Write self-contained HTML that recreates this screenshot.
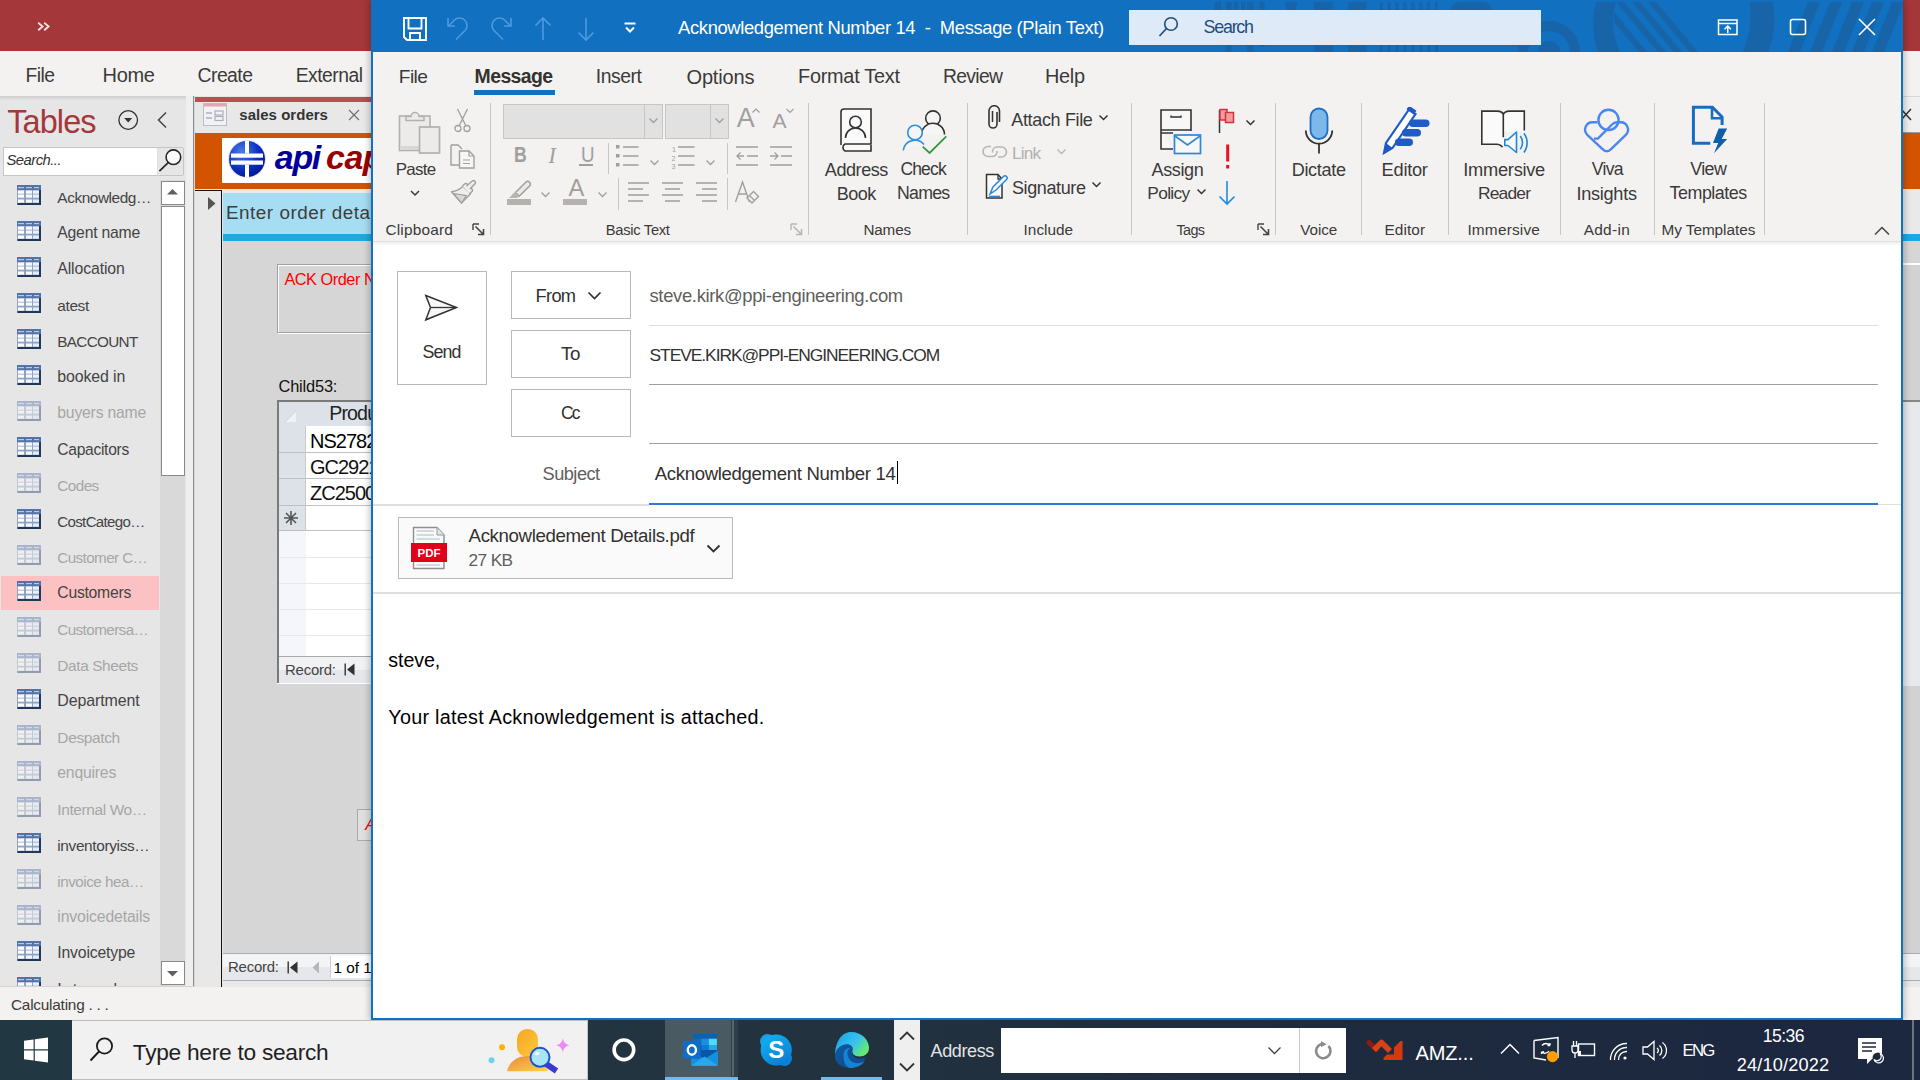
<!DOCTYPE html><html><head><meta charset="utf-8"><style>
html,body{margin:0;padding:0;width:1920px;height:1080px;overflow:hidden;background:#D6D6D6;}
body{position:relative;font-family:"Liberation Sans",sans-serif;}
.r{position:absolute;display:block;}
.t{position:absolute;white-space:pre;line-height:1;}
</style></head><body><div class="r" style="left:0px;top:0px;width:1920px;height:51px;background:#A4373A;"></div><svg class="r" style="left:36px;top:21px;" width="15" height="11" viewBox="0 0 15 11"><path d="M2.2 1.8 L6.6 5.5 L2.2 9.2 M8.2 1.8 L12.6 5.5 L8.2 9.2" stroke="#FADDE0" stroke-width="1.9" fill="none"/></svg><div class="r" style="left:0px;top:51px;width:1920px;height:45px;background:#F3F2F1;"></div><div class="t" style="left:25.50px;top:65.65px;font-size:19.31px;color:#3B3A39;letter-spacing:-0.529px;">File</div><div class="t" style="left:102.50px;top:65.06px;font-size:20.00px;color:#3B3A39;letter-spacing:-0.303px;">Home</div><div class="t" style="left:197.50px;top:65.57px;font-size:19.40px;color:#3B3A39;letter-spacing:-0.542px;">Create</div><div class="t" style="left:295.75px;top:65.65px;font-size:19.31px;color:#3B3A39;letter-spacing:-0.517px;">External</div><div class="r" style="left:0px;top:96px;width:1920px;height:5px;background:linear-gradient(#CFCFCF,#E6E6E6);"></div><div class="r" style="left:0px;top:100px;width:186px;height:887px;background:#E6E6E6;"></div><div class="r" style="left:186px;top:96px;width:7px;height:891px;background:#EEEFF0;"></div><div class="r" style="left:193px;top:96px;width:1px;height:891px;background:#8A8E93;"></div><div class="t" style="left:7.20px;top:106.34px;font-size:32.44px;color:#A4373A;letter-spacing:-0.868px;">Tables</div><svg class="r" style="left:117px;top:109px;" width="23" height="23" viewBox="0 0 23 23"><circle cx="11.2" cy="11" r="9.3" stroke="#333" stroke-width="1.3" fill="none"/><path d="M7.2 9 L15.2 9 L11.2 13.6 Z" fill="#333"/></svg><svg class="r" style="left:156px;top:111px;" width="13" height="19" viewBox="0 0 13 19"><path d="M10 1.5 L2.5 9 L10 16.5" stroke="#444" stroke-width="1.5" fill="none"/></svg><div class="r" style="left:3px;top:147px;width:180px;height:29px;background:#FFF;border:1px solid #C6C6C6;box-sizing:border-box;"></div><div class="r" style="left:157px;top:148px;width:25px;height:27px;background:#E6E6E6;border-left:1px solid #E0E0E0;border-right:1px solid #C6C6C6;"></div><svg class="r" style="left:157px;top:148px;" width="26" height="27" viewBox="0 0 26 27"><circle cx="16.4" cy="9.2" r="7.3" stroke="#262626" stroke-width="1.6" fill="#FAFAFA"/><path d="M11.2 14.6 L2.4 23.2" stroke="#262626" stroke-width="1.7"/></svg><div class="t" style="left:6.50px;top:153.45px;font-size:14.83px;color:#333;font-style:italic;letter-spacing:-0.539px;">Search...</div><div class="r" style="left:160px;top:180px;width:25px;height:807px;background:#D9D9D9;"></div><div class="r" style="left:160.5px;top:180.5px;width:24px;height:24px;background:#FFF;border:1px solid #8A8A8A;box-sizing:border-box;"></div><svg class="r" style="left:160px;top:180px;" width="25" height="25" viewBox="0 0 25 25"><path d="M7 14.5 L12.5 9 L18 14.5 Z" fill="#606060"/></svg><div class="r" style="left:160.5px;top:205.5px;width:24px;height:270px;background:#FFF;border:1px solid #8A8A8A;box-sizing:border-box;"></div><div class="r" style="left:160.5px;top:961px;width:24px;height:24px;background:#FFF;border:1px solid #8A8A8A;box-sizing:border-box;"></div><svg class="r" style="left:160px;top:961px;" width="25" height="25" viewBox="0 0 25 25"><path d="M7 10 L12.5 15.5 L18 10 Z" fill="#606060"/></svg><div class="r" style="left:1px;top:576px;width:158px;height:34px;background:#FCC2C3;"></div><div class="r" style="left:0;top:180px;width:160px;height:806px;overflow:hidden;"><div class="r" style="left:0;top:-180px;width:160px;height:1080px;"><svg class="r" style="left:17px;top:185px;" width="24" height="20" viewBox="0 0 24 20"><rect x="0" y="0" width="24" height="20" fill="#8FA2C0"/><rect x="0" y="0" width="24" height="5" fill="#5472A8"/><rect x="1" y="2" width="6" height="1.2" fill="#B9C7E0"/><rect x="9" y="2" width="6" height="1.2" fill="#B9C7E0"/><rect x="17" y="2" width="5" height="1.2" fill="#B9C7E0"/><rect x="1" y="5.5" width="6" height="3.2" fill="#FFF"/><rect x="9" y="5.5" width="6" height="3.2" fill="#F4F8FF"/><rect x="16" y="5.5" width="6" height="3.2" fill="#E8F0FF"/><rect x="1" y="9.5" width="6" height="3.2" fill="#FFF"/><rect x="9" y="9.5" width="6" height="3.2" fill="#F4F8FF"/><rect x="16" y="9.5" width="6" height="3.2" fill="#E8F0FF"/><rect x="1" y="14.5" width="6" height="3.2" fill="#FFF"/><rect x="9" y="14.5" width="6" height="3.2" fill="#F4F8FF"/><rect x="16" y="14.5" width="6" height="3.2" fill="#E2ECFF"/><rect x="22" y="5" width="2" height="15" fill="#22385A"/><rect x="0.5" y="18" width="23.5" height="2" fill="#22385A"/></svg><div class="t" style="left:57.30px;top:189.66px;font-size:15.41px;color:#444444;letter-spacing:-0.444px;">Acknowledg…</div><svg class="r" style="left:17px;top:221px;" width="24" height="20" viewBox="0 0 24 20"><rect x="0" y="0" width="24" height="20" fill="#8FA2C0"/><rect x="0" y="0" width="24" height="5" fill="#5472A8"/><rect x="1" y="2" width="6" height="1.2" fill="#B9C7E0"/><rect x="9" y="2" width="6" height="1.2" fill="#B9C7E0"/><rect x="17" y="2" width="5" height="1.2" fill="#B9C7E0"/><rect x="1" y="5.5" width="6" height="3.2" fill="#FFF"/><rect x="9" y="5.5" width="6" height="3.2" fill="#F4F8FF"/><rect x="16" y="5.5" width="6" height="3.2" fill="#E8F0FF"/><rect x="1" y="9.5" width="6" height="3.2" fill="#FFF"/><rect x="9" y="9.5" width="6" height="3.2" fill="#F4F8FF"/><rect x="16" y="9.5" width="6" height="3.2" fill="#E8F0FF"/><rect x="1" y="14.5" width="6" height="3.2" fill="#FFF"/><rect x="9" y="14.5" width="6" height="3.2" fill="#F4F8FF"/><rect x="16" y="14.5" width="6" height="3.2" fill="#E2ECFF"/><rect x="22" y="5" width="2" height="15" fill="#22385A"/><rect x="0.5" y="18" width="23.5" height="2" fill="#22385A"/></svg><div class="t" style="left:57.30px;top:225.36px;font-size:15.75px;color:#444444;letter-spacing:-0.222px;">Agent name</div><svg class="r" style="left:17px;top:257px;" width="24" height="20" viewBox="0 0 24 20"><rect x="0" y="0" width="24" height="20" fill="#8FA2C0"/><rect x="0" y="0" width="24" height="5" fill="#5472A8"/><rect x="1" y="2" width="6" height="1.2" fill="#B9C7E0"/><rect x="9" y="2" width="6" height="1.2" fill="#B9C7E0"/><rect x="17" y="2" width="5" height="1.2" fill="#B9C7E0"/><rect x="1" y="5.5" width="6" height="3.2" fill="#FFF"/><rect x="9" y="5.5" width="6" height="3.2" fill="#F4F8FF"/><rect x="16" y="5.5" width="6" height="3.2" fill="#E8F0FF"/><rect x="1" y="9.5" width="6" height="3.2" fill="#FFF"/><rect x="9" y="9.5" width="6" height="3.2" fill="#F4F8FF"/><rect x="16" y="9.5" width="6" height="3.2" fill="#E8F0FF"/><rect x="1" y="14.5" width="6" height="3.2" fill="#FFF"/><rect x="9" y="14.5" width="6" height="3.2" fill="#F4F8FF"/><rect x="16" y="14.5" width="6" height="3.2" fill="#E2ECFF"/><rect x="22" y="5" width="2" height="15" fill="#22385A"/><rect x="0.5" y="18" width="23.5" height="2" fill="#22385A"/></svg><div class="t" style="left:57.30px;top:261.28px;font-size:15.85px;color:#444444;letter-spacing:-0.134px;">Allocation</div><svg class="r" style="left:17px;top:293px;" width="24" height="20" viewBox="0 0 24 20"><rect x="0" y="0" width="24" height="20" fill="#8FA2C0"/><rect x="0" y="0" width="24" height="5" fill="#5472A8"/><rect x="1" y="2" width="6" height="1.2" fill="#B9C7E0"/><rect x="9" y="2" width="6" height="1.2" fill="#B9C7E0"/><rect x="17" y="2" width="5" height="1.2" fill="#B9C7E0"/><rect x="1" y="5.5" width="6" height="3.2" fill="#FFF"/><rect x="9" y="5.5" width="6" height="3.2" fill="#F4F8FF"/><rect x="16" y="5.5" width="6" height="3.2" fill="#E8F0FF"/><rect x="1" y="9.5" width="6" height="3.2" fill="#FFF"/><rect x="9" y="9.5" width="6" height="3.2" fill="#F4F8FF"/><rect x="16" y="9.5" width="6" height="3.2" fill="#E8F0FF"/><rect x="1" y="14.5" width="6" height="3.2" fill="#FFF"/><rect x="9" y="14.5" width="6" height="3.2" fill="#F4F8FF"/><rect x="16" y="14.5" width="6" height="3.2" fill="#E2ECFF"/><rect x="22" y="5" width="2" height="15" fill="#22385A"/><rect x="0.5" y="18" width="23.5" height="2" fill="#22385A"/></svg><div class="t" style="left:57.30px;top:297.64px;font-size:15.42px;color:#444444;letter-spacing:-0.368px;">atest</div><svg class="r" style="left:17px;top:329px;" width="24" height="20" viewBox="0 0 24 20"><rect x="0" y="0" width="24" height="20" fill="#8FA2C0"/><rect x="0" y="0" width="24" height="5" fill="#5472A8"/><rect x="1" y="2" width="6" height="1.2" fill="#B9C7E0"/><rect x="9" y="2" width="6" height="1.2" fill="#B9C7E0"/><rect x="17" y="2" width="5" height="1.2" fill="#B9C7E0"/><rect x="1" y="5.5" width="6" height="3.2" fill="#FFF"/><rect x="9" y="5.5" width="6" height="3.2" fill="#F4F8FF"/><rect x="16" y="5.5" width="6" height="3.2" fill="#E8F0FF"/><rect x="1" y="9.5" width="6" height="3.2" fill="#FFF"/><rect x="9" y="9.5" width="6" height="3.2" fill="#F4F8FF"/><rect x="16" y="9.5" width="6" height="3.2" fill="#E8F0FF"/><rect x="1" y="14.5" width="6" height="3.2" fill="#FFF"/><rect x="9" y="14.5" width="6" height="3.2" fill="#F4F8FF"/><rect x="16" y="14.5" width="6" height="3.2" fill="#E2ECFF"/><rect x="22" y="5" width="2" height="15" fill="#22385A"/><rect x="0.5" y="18" width="23.5" height="2" fill="#22385A"/></svg><div class="t" style="left:57.30px;top:333.78px;font-size:15.26px;color:#444444;letter-spacing:-0.661px;">BACCOUNT</div><svg class="r" style="left:17px;top:365px;" width="24" height="20" viewBox="0 0 24 20"><rect x="0" y="0" width="24" height="20" fill="#8FA2C0"/><rect x="0" y="0" width="24" height="5" fill="#5472A8"/><rect x="1" y="2" width="6" height="1.2" fill="#B9C7E0"/><rect x="9" y="2" width="6" height="1.2" fill="#B9C7E0"/><rect x="17" y="2" width="5" height="1.2" fill="#B9C7E0"/><rect x="1" y="5.5" width="6" height="3.2" fill="#FFF"/><rect x="9" y="5.5" width="6" height="3.2" fill="#F4F8FF"/><rect x="16" y="5.5" width="6" height="3.2" fill="#E8F0FF"/><rect x="1" y="9.5" width="6" height="3.2" fill="#FFF"/><rect x="9" y="9.5" width="6" height="3.2" fill="#F4F8FF"/><rect x="16" y="9.5" width="6" height="3.2" fill="#E8F0FF"/><rect x="1" y="14.5" width="6" height="3.2" fill="#FFF"/><rect x="9" y="14.5" width="6" height="3.2" fill="#F4F8FF"/><rect x="16" y="14.5" width="6" height="3.2" fill="#E2ECFF"/><rect x="22" y="5" width="2" height="15" fill="#22385A"/><rect x="0.5" y="18" width="23.5" height="2" fill="#22385A"/></svg><div class="t" style="left:57.30px;top:369.23px;font-size:15.91px;color:#444444;letter-spacing:-0.120px;">booked in</div><svg class="r" style="left:17px;top:401px;opacity:0.42;" width="24" height="20" viewBox="0 0 24 20"><rect x="0" y="0" width="24" height="20" fill="#8FA2C0"/><rect x="0" y="0" width="24" height="5" fill="#5472A8"/><rect x="1" y="2" width="6" height="1.2" fill="#B9C7E0"/><rect x="9" y="2" width="6" height="1.2" fill="#B9C7E0"/><rect x="17" y="2" width="5" height="1.2" fill="#B9C7E0"/><rect x="1" y="5.5" width="6" height="3.2" fill="#FFF"/><rect x="9" y="5.5" width="6" height="3.2" fill="#F4F8FF"/><rect x="16" y="5.5" width="6" height="3.2" fill="#E8F0FF"/><rect x="1" y="9.5" width="6" height="3.2" fill="#FFF"/><rect x="9" y="9.5" width="6" height="3.2" fill="#F4F8FF"/><rect x="16" y="9.5" width="6" height="3.2" fill="#E8F0FF"/><rect x="1" y="14.5" width="6" height="3.2" fill="#FFF"/><rect x="9" y="14.5" width="6" height="3.2" fill="#F4F8FF"/><rect x="16" y="14.5" width="6" height="3.2" fill="#E2ECFF"/><rect x="22" y="5" width="2" height="15" fill="#22385A"/><rect x="0.5" y="18" width="23.5" height="2" fill="#22385A"/></svg><div class="t" style="left:57.30px;top:405.35px;font-size:15.76px;color:#A6A6A6;letter-spacing:-0.210px;">buyers name</div><svg class="r" style="left:17px;top:437px;" width="24" height="20" viewBox="0 0 24 20"><rect x="0" y="0" width="24" height="20" fill="#8FA2C0"/><rect x="0" y="0" width="24" height="5" fill="#5472A8"/><rect x="1" y="2" width="6" height="1.2" fill="#B9C7E0"/><rect x="9" y="2" width="6" height="1.2" fill="#B9C7E0"/><rect x="17" y="2" width="5" height="1.2" fill="#B9C7E0"/><rect x="1" y="5.5" width="6" height="3.2" fill="#FFF"/><rect x="9" y="5.5" width="6" height="3.2" fill="#F4F8FF"/><rect x="16" y="5.5" width="6" height="3.2" fill="#E8F0FF"/><rect x="1" y="9.5" width="6" height="3.2" fill="#FFF"/><rect x="9" y="9.5" width="6" height="3.2" fill="#F4F8FF"/><rect x="16" y="9.5" width="6" height="3.2" fill="#E8F0FF"/><rect x="1" y="14.5" width="6" height="3.2" fill="#FFF"/><rect x="9" y="14.5" width="6" height="3.2" fill="#F4F8FF"/><rect x="16" y="14.5" width="6" height="3.2" fill="#E2ECFF"/><rect x="22" y="5" width="2" height="15" fill="#22385A"/><rect x="0.5" y="18" width="23.5" height="2" fill="#22385A"/></svg><div class="t" style="left:57.30px;top:441.50px;font-size:15.59px;color:#444444;letter-spacing:-0.280px;">Capacitors</div><svg class="r" style="left:17px;top:473px;opacity:0.42;" width="24" height="20" viewBox="0 0 24 20"><rect x="0" y="0" width="24" height="20" fill="#8FA2C0"/><rect x="0" y="0" width="24" height="5" fill="#5472A8"/><rect x="1" y="2" width="6" height="1.2" fill="#B9C7E0"/><rect x="9" y="2" width="6" height="1.2" fill="#B9C7E0"/><rect x="17" y="2" width="5" height="1.2" fill="#B9C7E0"/><rect x="1" y="5.5" width="6" height="3.2" fill="#FFF"/><rect x="9" y="5.5" width="6" height="3.2" fill="#F4F8FF"/><rect x="16" y="5.5" width="6" height="3.2" fill="#E8F0FF"/><rect x="1" y="9.5" width="6" height="3.2" fill="#FFF"/><rect x="9" y="9.5" width="6" height="3.2" fill="#F4F8FF"/><rect x="16" y="9.5" width="6" height="3.2" fill="#E8F0FF"/><rect x="1" y="14.5" width="6" height="3.2" fill="#FFF"/><rect x="9" y="14.5" width="6" height="3.2" fill="#F4F8FF"/><rect x="16" y="14.5" width="6" height="3.2" fill="#E2ECFF"/><rect x="22" y="5" width="2" height="15" fill="#22385A"/><rect x="0.5" y="18" width="23.5" height="2" fill="#22385A"/></svg><div class="t" style="left:57.30px;top:477.74px;font-size:15.31px;color:#A6A6A6;letter-spacing:-0.563px;">Codes</div><svg class="r" style="left:17px;top:509px;" width="24" height="20" viewBox="0 0 24 20"><rect x="0" y="0" width="24" height="20" fill="#8FA2C0"/><rect x="0" y="0" width="24" height="5" fill="#5472A8"/><rect x="1" y="2" width="6" height="1.2" fill="#B9C7E0"/><rect x="9" y="2" width="6" height="1.2" fill="#B9C7E0"/><rect x="17" y="2" width="5" height="1.2" fill="#B9C7E0"/><rect x="1" y="5.5" width="6" height="3.2" fill="#FFF"/><rect x="9" y="5.5" width="6" height="3.2" fill="#F4F8FF"/><rect x="16" y="5.5" width="6" height="3.2" fill="#E8F0FF"/><rect x="1" y="9.5" width="6" height="3.2" fill="#FFF"/><rect x="9" y="9.5" width="6" height="3.2" fill="#F4F8FF"/><rect x="16" y="9.5" width="6" height="3.2" fill="#E8F0FF"/><rect x="1" y="14.5" width="6" height="3.2" fill="#FFF"/><rect x="9" y="14.5" width="6" height="3.2" fill="#F4F8FF"/><rect x="16" y="14.5" width="6" height="3.2" fill="#E2ECFF"/><rect x="22" y="5" width="2" height="15" fill="#22385A"/><rect x="0.5" y="18" width="23.5" height="2" fill="#22385A"/></svg><div class="t" style="left:57.30px;top:513.97px;font-size:15.04px;color:#444444;letter-spacing:-0.643px;">CostCatego…</div><svg class="r" style="left:17px;top:545px;opacity:0.42;" width="24" height="20" viewBox="0 0 24 20"><rect x="0" y="0" width="24" height="20" fill="#8FA2C0"/><rect x="0" y="0" width="24" height="5" fill="#5472A8"/><rect x="1" y="2" width="6" height="1.2" fill="#B9C7E0"/><rect x="9" y="2" width="6" height="1.2" fill="#B9C7E0"/><rect x="17" y="2" width="5" height="1.2" fill="#B9C7E0"/><rect x="1" y="5.5" width="6" height="3.2" fill="#FFF"/><rect x="9" y="5.5" width="6" height="3.2" fill="#F4F8FF"/><rect x="16" y="5.5" width="6" height="3.2" fill="#E8F0FF"/><rect x="1" y="9.5" width="6" height="3.2" fill="#FFF"/><rect x="9" y="9.5" width="6" height="3.2" fill="#F4F8FF"/><rect x="16" y="9.5" width="6" height="3.2" fill="#E8F0FF"/><rect x="1" y="14.5" width="6" height="3.2" fill="#FFF"/><rect x="9" y="14.5" width="6" height="3.2" fill="#F4F8FF"/><rect x="16" y="14.5" width="6" height="3.2" fill="#E2ECFF"/><rect x="22" y="5" width="2" height="15" fill="#22385A"/><rect x="0.5" y="18" width="23.5" height="2" fill="#22385A"/></svg><div class="t" style="left:57.30px;top:549.85px;font-size:15.18px;color:#A6A6A6;letter-spacing:-0.568px;">Customer C…</div><svg class="r" style="left:17px;top:581px;" width="24" height="20" viewBox="0 0 24 20"><rect x="0" y="0" width="24" height="20" fill="#8FA2C0"/><rect x="0" y="0" width="24" height="5" fill="#5472A8"/><rect x="1" y="2" width="6" height="1.2" fill="#B9C7E0"/><rect x="9" y="2" width="6" height="1.2" fill="#B9C7E0"/><rect x="17" y="2" width="5" height="1.2" fill="#B9C7E0"/><rect x="1" y="5.5" width="6" height="3.2" fill="#FFF"/><rect x="9" y="5.5" width="6" height="3.2" fill="#F4F8FF"/><rect x="16" y="5.5" width="6" height="3.2" fill="#E8F0FF"/><rect x="1" y="9.5" width="6" height="3.2" fill="#FFF"/><rect x="9" y="9.5" width="6" height="3.2" fill="#F4F8FF"/><rect x="16" y="9.5" width="6" height="3.2" fill="#E8F0FF"/><rect x="1" y="14.5" width="6" height="3.2" fill="#FFF"/><rect x="9" y="14.5" width="6" height="3.2" fill="#F4F8FF"/><rect x="16" y="14.5" width="6" height="3.2" fill="#E2ECFF"/><rect x="22" y="5" width="2" height="15" fill="#22385A"/><rect x="0.5" y="18" width="23.5" height="2" fill="#22385A"/></svg><div class="t" style="left:57.30px;top:585.40px;font-size:15.71px;color:#444444;letter-spacing:-0.247px;">Customers</div><svg class="r" style="left:17px;top:617px;opacity:0.42;" width="24" height="20" viewBox="0 0 24 20"><rect x="0" y="0" width="24" height="20" fill="#8FA2C0"/><rect x="0" y="0" width="24" height="5" fill="#5472A8"/><rect x="1" y="2" width="6" height="1.2" fill="#B9C7E0"/><rect x="9" y="2" width="6" height="1.2" fill="#B9C7E0"/><rect x="17" y="2" width="5" height="1.2" fill="#B9C7E0"/><rect x="1" y="5.5" width="6" height="3.2" fill="#FFF"/><rect x="9" y="5.5" width="6" height="3.2" fill="#F4F8FF"/><rect x="16" y="5.5" width="6" height="3.2" fill="#E8F0FF"/><rect x="1" y="9.5" width="6" height="3.2" fill="#FFF"/><rect x="9" y="9.5" width="6" height="3.2" fill="#F4F8FF"/><rect x="16" y="9.5" width="6" height="3.2" fill="#E8F0FF"/><rect x="1" y="14.5" width="6" height="3.2" fill="#FFF"/><rect x="9" y="14.5" width="6" height="3.2" fill="#F4F8FF"/><rect x="16" y="14.5" width="6" height="3.2" fill="#E2ECFF"/><rect x="22" y="5" width="2" height="15" fill="#22385A"/><rect x="0.5" y="18" width="23.5" height="2" fill="#22385A"/></svg><div class="t" style="left:57.30px;top:621.83px;font-size:15.20px;color:#A6A6A6;letter-spacing:-0.563px;">Customersa…</div><svg class="r" style="left:17px;top:653px;opacity:0.42;" width="24" height="20" viewBox="0 0 24 20"><rect x="0" y="0" width="24" height="20" fill="#8FA2C0"/><rect x="0" y="0" width="24" height="5" fill="#5472A8"/><rect x="1" y="2" width="6" height="1.2" fill="#B9C7E0"/><rect x="9" y="2" width="6" height="1.2" fill="#B9C7E0"/><rect x="17" y="2" width="5" height="1.2" fill="#B9C7E0"/><rect x="1" y="5.5" width="6" height="3.2" fill="#FFF"/><rect x="9" y="5.5" width="6" height="3.2" fill="#F4F8FF"/><rect x="16" y="5.5" width="6" height="3.2" fill="#E8F0FF"/><rect x="1" y="9.5" width="6" height="3.2" fill="#FFF"/><rect x="9" y="9.5" width="6" height="3.2" fill="#F4F8FF"/><rect x="16" y="9.5" width="6" height="3.2" fill="#E8F0FF"/><rect x="1" y="14.5" width="6" height="3.2" fill="#FFF"/><rect x="9" y="14.5" width="6" height="3.2" fill="#F4F8FF"/><rect x="16" y="14.5" width="6" height="3.2" fill="#E2ECFF"/><rect x="22" y="5" width="2" height="15" fill="#22385A"/><rect x="0.5" y="18" width="23.5" height="2" fill="#22385A"/></svg><div class="t" style="left:57.30px;top:657.65px;font-size:15.41px;color:#A6A6A6;letter-spacing:-0.382px;">Data Sheets</div><svg class="r" style="left:17px;top:689px;" width="24" height="20" viewBox="0 0 24 20"><rect x="0" y="0" width="24" height="20" fill="#8FA2C0"/><rect x="0" y="0" width="24" height="5" fill="#5472A8"/><rect x="1" y="2" width="6" height="1.2" fill="#B9C7E0"/><rect x="9" y="2" width="6" height="1.2" fill="#B9C7E0"/><rect x="17" y="2" width="5" height="1.2" fill="#B9C7E0"/><rect x="1" y="5.5" width="6" height="3.2" fill="#FFF"/><rect x="9" y="5.5" width="6" height="3.2" fill="#F4F8FF"/><rect x="16" y="5.5" width="6" height="3.2" fill="#E8F0FF"/><rect x="1" y="9.5" width="6" height="3.2" fill="#FFF"/><rect x="9" y="9.5" width="6" height="3.2" fill="#F4F8FF"/><rect x="16" y="9.5" width="6" height="3.2" fill="#E8F0FF"/><rect x="1" y="14.5" width="6" height="3.2" fill="#FFF"/><rect x="9" y="14.5" width="6" height="3.2" fill="#F4F8FF"/><rect x="16" y="14.5" width="6" height="3.2" fill="#E2ECFF"/><rect x="22" y="5" width="2" height="15" fill="#22385A"/><rect x="0.5" y="18" width="23.5" height="2" fill="#22385A"/></svg><div class="t" style="left:57.30px;top:693.19px;font-size:15.96px;color:#444444;letter-spacing:-0.099px;">Department</div><svg class="r" style="left:17px;top:725px;opacity:0.42;" width="24" height="20" viewBox="0 0 24 20"><rect x="0" y="0" width="24" height="20" fill="#8FA2C0"/><rect x="0" y="0" width="24" height="5" fill="#5472A8"/><rect x="1" y="2" width="6" height="1.2" fill="#B9C7E0"/><rect x="9" y="2" width="6" height="1.2" fill="#B9C7E0"/><rect x="17" y="2" width="5" height="1.2" fill="#B9C7E0"/><rect x="1" y="5.5" width="6" height="3.2" fill="#FFF"/><rect x="9" y="5.5" width="6" height="3.2" fill="#F4F8FF"/><rect x="16" y="5.5" width="6" height="3.2" fill="#E8F0FF"/><rect x="1" y="9.5" width="6" height="3.2" fill="#FFF"/><rect x="9" y="9.5" width="6" height="3.2" fill="#F4F8FF"/><rect x="16" y="9.5" width="6" height="3.2" fill="#E8F0FF"/><rect x="1" y="14.5" width="6" height="3.2" fill="#FFF"/><rect x="9" y="14.5" width="6" height="3.2" fill="#F4F8FF"/><rect x="16" y="14.5" width="6" height="3.2" fill="#E2ECFF"/><rect x="22" y="5" width="2" height="15" fill="#22385A"/><rect x="0.5" y="18" width="23.5" height="2" fill="#22385A"/></svg><div class="t" style="left:57.30px;top:729.57px;font-size:15.51px;color:#A6A6A6;letter-spacing:-0.362px;">Despatch</div><svg class="r" style="left:17px;top:761px;opacity:0.42;" width="24" height="20" viewBox="0 0 24 20"><rect x="0" y="0" width="24" height="20" fill="#8FA2C0"/><rect x="0" y="0" width="24" height="5" fill="#5472A8"/><rect x="1" y="2" width="6" height="1.2" fill="#B9C7E0"/><rect x="9" y="2" width="6" height="1.2" fill="#B9C7E0"/><rect x="17" y="2" width="5" height="1.2" fill="#B9C7E0"/><rect x="1" y="5.5" width="6" height="3.2" fill="#FFF"/><rect x="9" y="5.5" width="6" height="3.2" fill="#F4F8FF"/><rect x="16" y="5.5" width="6" height="3.2" fill="#E8F0FF"/><rect x="1" y="9.5" width="6" height="3.2" fill="#FFF"/><rect x="9" y="9.5" width="6" height="3.2" fill="#F4F8FF"/><rect x="16" y="9.5" width="6" height="3.2" fill="#E8F0FF"/><rect x="1" y="14.5" width="6" height="3.2" fill="#FFF"/><rect x="9" y="14.5" width="6" height="3.2" fill="#F4F8FF"/><rect x="16" y="14.5" width="6" height="3.2" fill="#E2ECFF"/><rect x="22" y="5" width="2" height="15" fill="#22385A"/><rect x="0.5" y="18" width="23.5" height="2" fill="#22385A"/></svg><div class="t" style="left:57.30px;top:765.36px;font-size:15.75px;color:#A6A6A6;letter-spacing:-0.203px;">enquires</div><svg class="r" style="left:17px;top:797px;opacity:0.42;" width="24" height="20" viewBox="0 0 24 20"><rect x="0" y="0" width="24" height="20" fill="#8FA2C0"/><rect x="0" y="0" width="24" height="5" fill="#5472A8"/><rect x="1" y="2" width="6" height="1.2" fill="#B9C7E0"/><rect x="9" y="2" width="6" height="1.2" fill="#B9C7E0"/><rect x="17" y="2" width="5" height="1.2" fill="#B9C7E0"/><rect x="1" y="5.5" width="6" height="3.2" fill="#FFF"/><rect x="9" y="5.5" width="6" height="3.2" fill="#F4F8FF"/><rect x="16" y="5.5" width="6" height="3.2" fill="#E8F0FF"/><rect x="1" y="9.5" width="6" height="3.2" fill="#FFF"/><rect x="9" y="9.5" width="6" height="3.2" fill="#F4F8FF"/><rect x="16" y="9.5" width="6" height="3.2" fill="#E8F0FF"/><rect x="1" y="14.5" width="6" height="3.2" fill="#FFF"/><rect x="9" y="14.5" width="6" height="3.2" fill="#F4F8FF"/><rect x="16" y="14.5" width="6" height="3.2" fill="#E2ECFF"/><rect x="22" y="5" width="2" height="15" fill="#22385A"/><rect x="0.5" y="18" width="23.5" height="2" fill="#22385A"/></svg><div class="t" style="left:57.30px;top:801.63px;font-size:15.43px;color:#A6A6A6;letter-spacing:-0.371px;">Internal Wo…</div><svg class="r" style="left:17px;top:833px;" width="24" height="20" viewBox="0 0 24 20"><rect x="0" y="0" width="24" height="20" fill="#8FA2C0"/><rect x="0" y="0" width="24" height="5" fill="#5472A8"/><rect x="1" y="2" width="6" height="1.2" fill="#B9C7E0"/><rect x="9" y="2" width="6" height="1.2" fill="#B9C7E0"/><rect x="17" y="2" width="5" height="1.2" fill="#B9C7E0"/><rect x="1" y="5.5" width="6" height="3.2" fill="#FFF"/><rect x="9" y="5.5" width="6" height="3.2" fill="#F4F8FF"/><rect x="16" y="5.5" width="6" height="3.2" fill="#E8F0FF"/><rect x="1" y="9.5" width="6" height="3.2" fill="#FFF"/><rect x="9" y="9.5" width="6" height="3.2" fill="#F4F8FF"/><rect x="16" y="9.5" width="6" height="3.2" fill="#E8F0FF"/><rect x="1" y="14.5" width="6" height="3.2" fill="#FFF"/><rect x="9" y="14.5" width="6" height="3.2" fill="#F4F8FF"/><rect x="16" y="14.5" width="6" height="3.2" fill="#E2ECFF"/><rect x="22" y="5" width="2" height="15" fill="#22385A"/><rect x="0.5" y="18" width="23.5" height="2" fill="#22385A"/></svg><div class="t" style="left:57.30px;top:837.65px;font-size:15.42px;color:#444444;letter-spacing:-0.359px;">inventoryiss…</div><svg class="r" style="left:17px;top:869px;opacity:0.42;" width="24" height="20" viewBox="0 0 24 20"><rect x="0" y="0" width="24" height="20" fill="#8FA2C0"/><rect x="0" y="0" width="24" height="5" fill="#5472A8"/><rect x="1" y="2" width="6" height="1.2" fill="#B9C7E0"/><rect x="9" y="2" width="6" height="1.2" fill="#B9C7E0"/><rect x="17" y="2" width="5" height="1.2" fill="#B9C7E0"/><rect x="1" y="5.5" width="6" height="3.2" fill="#FFF"/><rect x="9" y="5.5" width="6" height="3.2" fill="#F4F8FF"/><rect x="16" y="5.5" width="6" height="3.2" fill="#E8F0FF"/><rect x="1" y="9.5" width="6" height="3.2" fill="#FFF"/><rect x="9" y="9.5" width="6" height="3.2" fill="#F4F8FF"/><rect x="16" y="9.5" width="6" height="3.2" fill="#E8F0FF"/><rect x="1" y="14.5" width="6" height="3.2" fill="#FFF"/><rect x="9" y="14.5" width="6" height="3.2" fill="#F4F8FF"/><rect x="16" y="14.5" width="6" height="3.2" fill="#E2ECFF"/><rect x="22" y="5" width="2" height="15" fill="#22385A"/><rect x="0.5" y="18" width="23.5" height="2" fill="#22385A"/></svg><div class="t" style="left:57.30px;top:873.81px;font-size:15.22px;color:#A6A6A6;letter-spacing:-0.475px;">invoice hea…</div><svg class="r" style="left:17px;top:905px;opacity:0.42;" width="24" height="20" viewBox="0 0 24 20"><rect x="0" y="0" width="24" height="20" fill="#8FA2C0"/><rect x="0" y="0" width="24" height="5" fill="#5472A8"/><rect x="1" y="2" width="6" height="1.2" fill="#B9C7E0"/><rect x="9" y="2" width="6" height="1.2" fill="#B9C7E0"/><rect x="17" y="2" width="5" height="1.2" fill="#B9C7E0"/><rect x="1" y="5.5" width="6" height="3.2" fill="#FFF"/><rect x="9" y="5.5" width="6" height="3.2" fill="#F4F8FF"/><rect x="16" y="5.5" width="6" height="3.2" fill="#E8F0FF"/><rect x="1" y="9.5" width="6" height="3.2" fill="#FFF"/><rect x="9" y="9.5" width="6" height="3.2" fill="#F4F8FF"/><rect x="16" y="9.5" width="6" height="3.2" fill="#E8F0FF"/><rect x="1" y="14.5" width="6" height="3.2" fill="#FFF"/><rect x="9" y="14.5" width="6" height="3.2" fill="#F4F8FF"/><rect x="16" y="14.5" width="6" height="3.2" fill="#E2ECFF"/><rect x="22" y="5" width="2" height="15" fill="#22385A"/><rect x="0.5" y="18" width="23.5" height="2" fill="#22385A"/></svg><div class="t" style="left:57.30px;top:909.32px;font-size:15.81px;color:#A6A6A6;letter-spacing:-0.148px;">invoicedetails</div><svg class="r" style="left:17px;top:941px;" width="24" height="20" viewBox="0 0 24 20"><rect x="0" y="0" width="24" height="20" fill="#8FA2C0"/><rect x="0" y="0" width="24" height="5" fill="#5472A8"/><rect x="1" y="2" width="6" height="1.2" fill="#B9C7E0"/><rect x="9" y="2" width="6" height="1.2" fill="#B9C7E0"/><rect x="17" y="2" width="5" height="1.2" fill="#B9C7E0"/><rect x="1" y="5.5" width="6" height="3.2" fill="#FFF"/><rect x="9" y="5.5" width="6" height="3.2" fill="#F4F8FF"/><rect x="16" y="5.5" width="6" height="3.2" fill="#E8F0FF"/><rect x="1" y="9.5" width="6" height="3.2" fill="#FFF"/><rect x="9" y="9.5" width="6" height="3.2" fill="#F4F8FF"/><rect x="16" y="9.5" width="6" height="3.2" fill="#E8F0FF"/><rect x="1" y="14.5" width="6" height="3.2" fill="#FFF"/><rect x="9" y="14.5" width="6" height="3.2" fill="#F4F8FF"/><rect x="16" y="14.5" width="6" height="3.2" fill="#E2ECFF"/><rect x="22" y="5" width="2" height="15" fill="#22385A"/><rect x="0.5" y="18" width="23.5" height="2" fill="#22385A"/></svg><div class="t" style="left:57.30px;top:945.35px;font-size:15.77px;color:#444444;letter-spacing:-0.180px;">Invoicetype</div><svg class="r" style="left:17px;top:977px;" width="24" height="20" viewBox="0 0 24 20"><rect x="0" y="0" width="24" height="20" fill="#8FA2C0"/><rect x="0" y="0" width="24" height="5" fill="#5472A8"/><rect x="1" y="2" width="6" height="1.2" fill="#B9C7E0"/><rect x="9" y="2" width="6" height="1.2" fill="#B9C7E0"/><rect x="17" y="2" width="5" height="1.2" fill="#B9C7E0"/><rect x="1" y="5.5" width="6" height="3.2" fill="#FFF"/><rect x="9" y="5.5" width="6" height="3.2" fill="#F4F8FF"/><rect x="16" y="5.5" width="6" height="3.2" fill="#E8F0FF"/><rect x="1" y="9.5" width="6" height="3.2" fill="#FFF"/><rect x="9" y="9.5" width="6" height="3.2" fill="#F4F8FF"/><rect x="16" y="9.5" width="6" height="3.2" fill="#E8F0FF"/><rect x="1" y="14.5" width="6" height="3.2" fill="#FFF"/><rect x="9" y="14.5" width="6" height="3.2" fill="#F4F8FF"/><rect x="16" y="14.5" width="6" height="3.2" fill="#E2ECFF"/><rect x="22" y="5" width="2" height="15" fill="#22385A"/><rect x="0.5" y="18" width="23.5" height="2" fill="#22385A"/></svg><div class="t" style="left:57.30px;top:981.04px;font-size:16.13px;color:#444444;letter-spacing:1.011px;">Intercal</div></div></div><div class="r" style="left:0px;top:986px;width:1920px;height:34px;background:#F3F2F1;border-top:1px solid #D4D4D4;box-sizing:border-box;"></div><div class="t" style="left:11.00px;top:996.97px;font-size:15.39px;color:#3B3A39;letter-spacing:-0.238px;">Calculating . . .</div><div class="r" style="left:194.5px;top:96px;width:1726px;height:891px;background:#E6E6E6;"></div><div class="r" style="left:194.5px;top:97px;width:1726px;height:5px;background:#BC4D51;"></div><div class="r" style="left:194.5px;top:102px;width:1726px;height:31px;background:#E8E8E8;"></div><svg class="r" style="left:203px;top:103px;" width="25" height="23" viewBox="0 0 25 23"><rect x="0.5" y="0.5" width="23" height="22" fill="#F2F2F6" stroke="#B9BDC6"/><rect x="1" y="1" width="22" height="2.5" fill="#E7A3AF"/><path d="M3 10 H9 M3 15 H9" stroke="#A9AFBD" stroke-width="1.3"/><rect x="12" y="8" width="8" height="4" fill="none" stroke="#A9AFBD" stroke-width="1.2"/><rect x="12" y="13.5" width="8" height="4" fill="none" stroke="#A9AFBD" stroke-width="1.2"/></svg><div class="t" style="left:239.30px;top:108.32px;font-size:14.97px;color:#333;font-weight:700;letter-spacing:0.040px;">sales orders</div><svg class="r" style="left:348px;top:109px;" width="12" height="12" viewBox="0 0 12 12"><path d="M1 1 L11 11 M11 1 L1 11" stroke="#6E6E6E" stroke-width="1.1"/></svg><div class="r" style="left:194.5px;top:133px;width:1726px;height:55.5px;background:#D35400;"></div><div class="r" style="left:222px;top:138px;width:1681px;height:45px;background:#FFFFFF;"></div><svg class="r" style="left:226px;top:139px;" width="42" height="41" viewBox="0 0 42 41"><defs><radialGradient id="lg" cx="0.35" cy="0.3" r="0.8"><stop offset="0" stop-color="#4A7BEA"/><stop offset="0.6" stop-color="#0A2FC0"/><stop offset="1" stop-color="#00148A"/></radialGradient></defs><circle cx="21" cy="20" r="19" fill="#E7E0EA"/><circle cx="21" cy="20" r="18" fill="url(#lg)"/><rect x="5" y="14.5" width="32" height="4.2" fill="#FFF"/><rect x="5" y="21.5" width="32" height="4.2" fill="#FFF"/><rect x="19" y="2" width="4" height="12.5" fill="#FFF"/><rect x="19" y="25.7" width="4" height="13" fill="#FFF"/></svg><div class="t" style="left:274.80px;top:139.71px;font-size:34.00px;color:#000099;font-weight:700;font-style:italic;letter-spacing:-1.320px;">api</div><div class="t" style="left:326.00px;top:139.71px;font-size:34.00px;color:#990000;font-weight:700;font-style:italic;letter-spacing:-0.500px;">cap</div><div class="r" style="left:194.5px;top:188.5px;width:1726px;height:5px;background:#E9E9E9;"></div><div class="r" style="left:194.5px;top:189.5px;width:27px;height:797.5px;background:#E8E8E8;border-top:1px solid #111;box-sizing:border-box;"></div><div class="r" style="left:221px;top:189.5px;width:1px;height:797.5px;background:#111;"></div><svg class="r" style="left:207px;top:196px;" width="10" height="16" viewBox="0 0 10 16"><path d="M1 1 L8.5 7.5 L1 14 Z" fill="#555"/></svg><div class="r" style="left:222.5px;top:193px;width:1681px;height:41px;background:#A6DDF2;"></div><div class="r" style="left:222.5px;top:234px;width:1698px;height:7px;background:#1CA9E1;"></div><div class="t" style="left:226.00px;top:204.00px;font-size:18.90px;color:#3D3D3D;letter-spacing:0.500px;">Enter order details</div><div class="r" style="left:222.5px;top:241px;width:1698px;height:712px;background:#D6D6D6;"></div><div class="r" style="left:276.5px;top:263.5px;width:200px;height:69px;background:#D6D6D6;border:1px solid #A0A0A0;box-shadow:inset 1px 1px 0 #FFF, 1px 1px 0 #FFF;box-sizing:border-box;"></div><div class="t" style="left:284.40px;top:270.99px;font-size:16.31px;color:#FF0000;letter-spacing:-0.467px;">ACK Order No</div><div class="t" style="left:278.50px;top:377.62px;font-size:16.39px;color:#111;letter-spacing:-0.166px;">Child53:</div><div class="r" style="left:276.5px;top:400px;width:200px;height:283px;background:#FFFFFF;border-left:2px solid #7A7A7A;border-top:2px solid #7A7A7A;box-sizing:border-box;"></div><div class="r" style="left:278.5px;top:402px;width:200px;height:24px;background:#DDE2E8;"></div><div class="r" style="left:278.5px;top:426px;width:27px;height:104.5px;background:#DDE2E8;"></div><svg class="r" style="left:282px;top:409px;" width="16" height="16" viewBox="0 0 16 16"><path d="M14 2 L14 13 L3 13 Z" fill="#EEF2F7"/><path d="M14 2 L3 13" stroke="#C9D3E0" stroke-width="1"/></svg><div class="t" style="left:329.20px;top:404.19px;font-size:19.62px;color:#222;letter-spacing:-0.865px;">Product</div><div class="r" style="left:278.5px;top:452px;width:200px;height:1px;background:#C0C0C0;"></div><div class="r" style="left:278.5px;top:478.3px;width:200px;height:1px;background:#C0C0C0;"></div><div class="r" style="left:278.5px;top:504.5px;width:200px;height:1px;background:#C0C0C0;"></div><div class="r" style="left:278.5px;top:530.4px;width:200px;height:1px;background:#C0C0C0;"></div><div class="r" style="left:305px;top:426px;width:1px;height:230px;background:#C8C8C8;"></div><div class="t" style="left:310.00px;top:430.88px;font-size:19.99px;color:#000;letter-spacing:-0.989px;">NS27821</div><div class="t" style="left:310.00px;top:456.88px;font-size:19.99px;color:#111;letter-spacing:-0.989px;">GC29210</div><div class="t" style="left:310.00px;top:482.88px;font-size:19.99px;color:#111;letter-spacing:-0.989px;">ZC25000</div><svg class="r" style="left:283px;top:510px;" width="16" height="16" viewBox="0 0 16 16"><path d="M8 1 V15 M1 8 H15 M3 3 L13 13 M13 3 L3 13" stroke="#555" stroke-width="1.6"/></svg><div class="r" style="left:278.5px;top:531px;width:27px;height:125px;background:#F4F6FC;"></div><div class="r" style="left:278.5px;top:556.5px;width:200px;height:1px;background:#E8E8E8;"></div><div class="r" style="left:278.5px;top:582.5px;width:200px;height:1px;background:#E8E8E8;"></div><div class="r" style="left:278.5px;top:608.5px;width:200px;height:1px;background:#E8E8E8;"></div><div class="r" style="left:278.5px;top:634.5px;width:200px;height:1px;background:#E8E8E8;"></div><div class="r" style="left:278.5px;top:655.5px;width:200px;height:1.5px;background:#A9A9A9;"></div><div class="r" style="left:278.5px;top:657px;width:200px;height:13px;background:#F1F2F4;"></div><div class="r" style="left:278.5px;top:670px;width:200px;height:12.5px;background:#E6E7EA;"></div><div class="r" style="left:276.5px;top:682.5px;width:200px;height:1.5px;background:#FFFFFF;"></div><div class="t" style="left:285.00px;top:662.77px;font-size:14.91px;color:#444;letter-spacing:-0.199px;">Record:</div><svg class="r" style="left:343px;top:662px;" width="14" height="15" viewBox="0 0 14 15"><rect x="1.5" y="1.5" width="1.4" height="12" fill="#333"/><path d="M11.5 1.5 L11.5 13.5 L4 7.5 Z" fill="#333"/></svg><div class="r" style="left:357px;top:809px;width:60px;height:32px;background:#DFDFDF;border:1px solid #A9A9A9;box-sizing:border-box;"></div><div class="t" style="left:365.34px;top:816.85px;font-size:16.72px;color:#FF0000;font-style:italic;">ACK</div><div class="r" style="left:222.5px;top:953px;width:1698px;height:27px;background:#F3F4F6;border-top:1.5px solid #A9ADB3;box-sizing:border-box;"></div><div class="r" style="left:222.5px;top:967px;width:1698px;height:13px;background:#E6E7EB;"></div><div class="r" style="left:222.5px;top:979.5px;width:1698px;height:1.5px;background:#A9ADB3;"></div><div class="r" style="left:222.5px;top:981px;width:1698px;height:6px;background:#E9E9E9;"></div><div class="t" style="left:228.00px;top:960.17px;font-size:14.91px;color:#444;letter-spacing:-0.199px;">Record:</div><svg class="r" style="left:286px;top:960px;" width="14" height="15" viewBox="0 0 14 15"><rect x="1.5" y="1.5" width="1.4" height="12" fill="#333"/><path d="M11.5 1.5 L11.5 13.5 L4 7.5 Z" fill="#333"/></svg><svg class="r" style="left:311px;top:960px;" width="10" height="15" viewBox="0 0 10 15"><path d="M8 1.5 L8 13.5 L1.5 7.5 Z" fill="#B4B7BC"/></svg><div class="r" style="left:330.3px;top:955.5px;width:120px;height:22.5px;background:#FFF;border-left:1px solid #D0D0D0;box-sizing:border-box;"></div><div class="t" style="left:333.50px;top:960.08px;font-size:15.26px;color:#000;">1 of 1</div><div class="r" style="left:1903px;top:96px;width:17px;height:37px;background:#F0F0F0;border-top:1px solid #D8D8D8;box-sizing:border-box;"></div><div class="r" style="left:1903px;top:131.5px;width:17px;height:1.5px;background:#9A9A9A;"></div><svg class="r" style="left:1900px;top:108px;" width="12" height="13" viewBox="0 0 12 13"><path d="M1 1 L11 12 M11 1 L1 12" stroke="#333" stroke-width="1.5"/></svg><div class="r" style="left:1903px;top:188.5px;width:17px;height:45.5px;background:#E9E9E9;"></div><div class="r" style="left:1903px;top:263px;width:17px;height:2px;background:#FFFFFF;"></div><div class="r" style="left:1903px;top:265px;width:17px;height:688px;background:#D2D2D2;"></div><div class="r" style="left:1903px;top:400px;width:17px;height:286px;background:#E8E9EC;border-top:2px solid #888;box-sizing:border-box;"></div><div class="r" style="left:371px;top:0px;width:1532px;height:1020px;background:#1170BF;box-shadow:0 0 7px 1px rgba(0,0,0,0.28);"></div><svg class="r" style="left:0px;top:0px;clip-path:inset(0 0 0 1200px);" width="1903" height="52" viewBox="0 0 1903 52"><svg x="0" y="0" width="1903" height="52" viewBox="0 0 1903 52"><g fill="#1764A8"><rect x="1214.8" y="2" width="6.2000000000000455" height="8"/><rect x="1233.6" y="2" width="4.7000000000000455" height="8"/><rect x="1241" y="2" width="4.2999999999999545" height="8"/><rect x="1225.8" y="2" width="5.7000000000000455" height="50"/><rect x="1246.9" y="2" width="6.599999999999909" height="50"/><rect x="1314" y="2" width="18.799999999999955" height="50"/><rect x="1348" y="2" width="18.40000000000009" height="50"/><rect x="1259.4" y="2" width="5.4" height="8"/><rect x="1259.4" y="45" width="5.4" height="2"/><path d="M1284.4 2 H1297.7 L1295 10 H1287 Z"/><rect x="1379.7" y="2" width="3" height="50"/><rect x="1387.6" y="2" width="3" height="50"/><rect x="1395.5" y="2" width="3" height="50"/><rect x="1403.4" y="2" width="3" height="50"/><rect x="1411.3" y="2" width="3" height="50"/><rect x="1419.2" y="2" width="3" height="50"/><rect x="1427.1" y="2" width="3" height="50"/><rect x="1435.0" y="2" width="3" height="50"/><path d="M1451 10 V8 A10 8 0 0 1 1461 2 H1481.8 A10 8 0 0 1 1491.8 10 Z"/><path d="M1518 52 A31 31 0 0 1 1580 52 H1570 A21 21 0 0 0 1528 52 Z"/><path d="M1538 52 A11 11 0 0 1 1560 52 Z"/><path d="M1596 2 A91 91 0 0 0 1598 52 H1620 A69 69 0 0 1 1616 2 Z"/><path d="M1749.8 2 A91 91 0 0 1 1742.7 52 H1768.4 A91 91 0 0 0 1772.8 2 Z"/><path d="M1616 2 H1624 L1666 52 H1658 Z"/><path d="M1632 2 H1640 L1682 52 H1674 Z"/><path d="M1648 2 H1656 L1698 52 H1690 Z"/><path d="M1614 12 L1647 52 H1639 L1614 22 Z"/><path d="M1808 2 H1820 L1800 52 H1788 Z"/><path d="M1830 2 H1842 L1822 52 H1810 Z"/><path d="M1852 2 H1864 L1844 52 H1832 Z"/><path d="M1872 2 H1884 L1864 52 H1852 Z"/><path d="M1892 2 H1904 L1884 52 H1872 Z"/></g></svg></svg><svg class="r" style="left:402px;top:16px;" width="26" height="26" viewBox="0 0 26 26"><path d="M2 2 H24 V24 H5 L2 21 Z" fill="none" stroke="#FFF" stroke-width="1.9"/><path d="M6.5 2.5 V12.5 H19.5 V2.5" fill="none" stroke="#FFF" stroke-width="1.9"/><path d="M8 24 V17 H18 V24" fill="none" stroke="#FFF" stroke-width="1.9"/></svg><svg class="r" style="left:446px;top:16px;" width="24" height="26" viewBox="0 0 24 26"><path d="M2 2 V10 H9" fill="none" stroke="#4C9BE0" stroke-width="1.6"/><path d="M2.5 10 L9 3.5 A7.5 7.5 0 0 1 19.5 14 L10 23.5" fill="none" stroke="#4C9BE0" stroke-width="1.6"/></svg><svg class="r" style="left:489px;top:16px;" width="24" height="26" viewBox="0 0 24 26"><path d="M22 2 V10 H15" fill="none" stroke="#4C9BE0" stroke-width="1.6"/><path d="M21.5 10 L15 3.5 A7.5 7.5 0 0 0 4.5 14 L14 23.5" fill="none" stroke="#4C9BE0" stroke-width="1.6"/></svg><svg class="r" style="left:534px;top:16px;" width="18" height="26" viewBox="0 0 18 26"><path d="M9 2 V24 M1.5 9.5 L9 2 L16.5 9.5" fill="none" stroke="#4C9BE0" stroke-width="1.6"/></svg><svg class="r" style="left:577px;top:16px;" width="18" height="26" viewBox="0 0 18 26"><path d="M9 2 V24 M1.5 16.5 L9 24 L16.5 16.5" fill="none" stroke="#4C9BE0" stroke-width="1.6"/></svg><svg class="r" style="left:623px;top:21px;" width="14" height="13" viewBox="0 0 14 13"><path d="M1.5 2.5 H12.5" stroke="#FFF" stroke-width="2"/><path d="M3 6.5 L7 10.5 L11 6.5" fill="none" stroke="#FFF" stroke-width="2"/></svg><div class="t" style="left:678.10px;top:19.42px;font-size:18.40px;color:#FFFFFF;letter-spacing:-0.372px;">Acknowledgement Number 14  -  Message (Plain Text)</div><div class="r" style="left:1129px;top:10px;width:412px;height:35px;background:#DEEAF8;"></div><svg class="r" style="left:1157px;top:15px;" width="24" height="24" viewBox="0 0 24 24"><circle cx="14" cy="9" r="6.3" stroke="#1E4E79" stroke-width="1.6" fill="none"/><path d="M9.5 13.5 L2.5 21" stroke="#1E4E79" stroke-width="1.7"/></svg><div class="t" style="left:1203.60px;top:19.28px;font-size:17.86px;color:#1E4E79;letter-spacing:-1.242px;">Search</div><svg class="r" style="left:1716px;top:17px;" width="24" height="20" viewBox="0 0 24 20"><rect x="2.5" y="3" width="18.5" height="14.5" fill="none" stroke="#FFF" stroke-width="1.5"/><path d="M2.5 6.5 H21" stroke="#FFF" stroke-width="1.5"/><path d="M11.75 16 V9.5 M8.5 12.3 L11.75 9 L15 12.3" fill="none" stroke="#FFF" stroke-width="1.5"/></svg><svg class="r" style="left:1788px;top:17px;" width="20" height="20" viewBox="0 0 20 20"><rect x="2.5" y="2.5" width="15" height="15" rx="2" fill="none" stroke="#FFF" stroke-width="1.6"/></svg><svg class="r" style="left:1857px;top:17px;" width="20" height="20" viewBox="0 0 20 20"><path d="M2 2 L18 18 M18 2 L2 18" stroke="#FFF" stroke-width="1.6"/></svg><div class="r" style="left:373px;top:52px;width:1528px;height:189px;background:#F3F2F1;"></div><div class="r" style="left:373px;top:240.5px;width:1528px;height:1.5px;background:#E1DFDD;"></div><div class="t" style="left:398.80px;top:67.49px;font-size:19.15px;color:#3B3A39;letter-spacing:-0.608px;">File</div><div class="t" style="left:474.60px;top:67.24px;font-size:19.44px;color:#333231;font-weight:700;letter-spacing:-0.609px;">Message</div><div class="t" style="left:595.80px;top:67.32px;font-size:19.35px;color:#3B3A39;letter-spacing:-0.475px;">Insert</div><div class="t" style="left:686.50px;top:66.73px;font-size:20.04px;color:#3B3A39;letter-spacing:-0.174px;">Options</div><div class="t" style="left:798.00px;top:66.88px;font-size:19.86px;color:#3B3A39;letter-spacing:-0.249px;">Format Text</div><div class="t" style="left:943.00px;top:67.36px;font-size:19.29px;color:#3B3A39;letter-spacing:-0.657px;">Review</div><div class="t" style="left:1045.00px;top:66.85px;font-size:19.90px;color:#3B3A39;letter-spacing:-0.300px;">Help</div><div class="r" style="left:474px;top:90px;width:81px;height:5px;background:#1170BF;"></div><div class="r" style="left:490.3px;top:103px;width:1px;height:132px;background:#C8C6C4;"></div><div class="r" style="left:808.3px;top:103px;width:1px;height:132px;background:#C8C6C4;"></div><div class="r" style="left:966.6px;top:103px;width:1px;height:132px;background:#C8C6C4;"></div><div class="r" style="left:1130.6px;top:103px;width:1px;height:132px;background:#C8C6C4;"></div><div class="r" style="left:1275.4px;top:103px;width:1px;height:132px;background:#C8C6C4;"></div><div class="r" style="left:1361.3px;top:103px;width:1px;height:132px;background:#C8C6C4;"></div><div class="r" style="left:1447.5px;top:103px;width:1px;height:132px;background:#C8C6C4;"></div><div class="r" style="left:1560.4px;top:103px;width:1px;height:132px;background:#C8C6C4;"></div><div class="r" style="left:1653.5px;top:103px;width:1px;height:132px;background:#C8C6C4;"></div><div class="r" style="left:1763.6px;top:103px;width:1px;height:132px;background:#C8C6C4;"></div><div class="t" style="left:385.40px;top:221.96px;font-size:15.41px;color:#3B3A39;letter-spacing:0.182px;">Clipboard</div><div class="t" style="left:605.80px;top:222.50px;font-size:14.76px;color:#3B3A39;letter-spacing:-0.313px;">Basic Text</div><div class="t" style="left:863.40px;top:222.09px;font-size:15.24px;color:#3B3A39;letter-spacing:-0.129px;">Names</div><div class="t" style="left:1023.60px;top:221.98px;font-size:15.38px;color:#3B3A39;letter-spacing:-0.016px;">Include</div><div class="t" style="left:1176.60px;top:222.83px;font-size:14.38px;color:#3B3A39;letter-spacing:-0.677px;">Tags</div><div class="t" style="left:1300.30px;top:222.07px;font-size:15.27px;color:#3B3A39;letter-spacing:-0.083px;">Voice</div><div class="t" style="left:1384.50px;top:221.96px;font-size:15.41px;color:#3B3A39;letter-spacing:0.057px;">Editor</div><div class="t" style="left:1467.40px;top:221.96px;font-size:15.41px;color:#3B3A39;letter-spacing:0.184px;">Immersive</div><div class="t" style="left:1583.70px;top:221.96px;font-size:15.41px;color:#3B3A39;letter-spacing:0.295px;">Add-in</div><div class="t" style="left:1661.50px;top:222.02px;font-size:15.33px;color:#3B3A39;letter-spacing:-0.043px;">My Templates</div><svg class="r" style="left:472px;top:222.5px;" width="14" height="13" viewBox="0 0 14 13"><path d="M1 1 H7 M1 1 V7" stroke="#444" stroke-width="1.4" fill="none"/><path d="M3.5 3.5 L11.5 11.5 M6 11.5 H11.5 V6" stroke="#444" stroke-width="1.6" fill="none"/></svg><svg class="r" style="left:790px;top:222.5px;" width="14" height="13" viewBox="0 0 14 13"><path d="M1 1 H7 M1 1 V7" stroke="#B8B6B4" stroke-width="1.4" fill="none"/><path d="M3.5 3.5 L11.5 11.5 M6 11.5 H11.5 V6" stroke="#B8B6B4" stroke-width="1.6" fill="none"/></svg><svg class="r" style="left:1257px;top:222.5px;" width="14" height="13" viewBox="0 0 14 13"><path d="M1 1 H7 M1 1 V7" stroke="#444" stroke-width="1.4" fill="none"/><path d="M3.5 3.5 L11.5 11.5 M6 11.5 H11.5 V6" stroke="#444" stroke-width="1.6" fill="none"/></svg><svg class="r" style="left:398px;top:107px;" width="44" height="48" viewBox="0 0 44 48"><rect x="1.5" y="9" width="30.5" height="34.5" fill="#EDEBE9" stroke="#B3B0AD" stroke-width="1.6"/><rect x="2.3" y="39" width="29" height="4" fill="#D9D7D5"/><path d="M8 9.5 V13.5 H26 V9.5 H21 A4 4 0 0 0 13 9.5 Z" fill="#EDEBE9" stroke="#B3B0AD" stroke-width="1.5"/><rect x="21.5" y="20" width="20" height="26" fill="#EDEBE9" stroke="#B3B0AD" stroke-width="1.7"/></svg><div class="t" style="left:395.80px;top:162.38px;font-size:16.91px;color:#3B3A39;letter-spacing:-0.750px;">Paste</div><svg class="r" style="left:409px;top:189px;" width="12" height="9" viewBox="0 0 12 9"><path d="M2 2 L6 6 L10 2" stroke="#3B3A39" stroke-width="1.5" fill="none"/></svg><svg class="r" style="left:454px;top:108px;" width="18" height="26" viewBox="0 0 18 26"><path d="M3.5 1 L11.5 17 M13.5 1 L5.5 17" stroke="#A19F9D" stroke-width="1.3"/><circle cx="4" cy="20.5" r="3" fill="none" stroke="#A19F9D" stroke-width="1.3"/><circle cx="13" cy="20.5" r="3" fill="none" stroke="#A19F9D" stroke-width="1.3"/></svg><svg class="r" style="left:450px;top:144px;" width="26" height="26" viewBox="0 0 26 26"><path d="M1 1 H8 L12 5 M1 1 V21 H9" fill="none" stroke="#A19F9D" stroke-width="1.4"/><path d="M9.5 7 H19 L24 12 V24 H9.5 Z" fill="#F7F6F5" stroke="#A19F9D" stroke-width="1.4"/><path d="M19 7 V12 H24" fill="none" stroke="#A19F9D" stroke-width="1.2"/><path d="M13 16 H20 M13 19.5 H20" stroke="#A19F9D" stroke-width="1.2"/></svg><svg class="r" style="left:450px;top:180px;" width="28" height="26" viewBox="0 0 28 26"><path d="M1.5 11.8 Q8 11 13 6.2 L20.5 13.7 L11.5 23 Z" fill="#EFEEED" stroke="#A19F9D" stroke-width="1.4" stroke-linejoin="round"/><path d="M3.5 13.5 L16.5 15.7 L11.5 23 Z" fill="#D9D8D7" stroke="#A19F9D" stroke-width="1.2" stroke-linejoin="round"/><path d="M12.5 6 L14.8 3.8 A1.4 1.4 0 0 1 16.8 3.8 L22.2 9.2 A1.4 1.4 0 0 1 22.2 11.2 L19.5 14" fill="#EFEEED" stroke="#A19F9D" stroke-width="1.4"/><path d="M16.5 6 L22.5 0.8 A2 2 0 0 1 25.2 3.5 L20 9" fill="#EFEEED" stroke="#A19F9D" stroke-width="1.4"/></svg><div class="r" style="left:503px;top:104px;width:160px;height:35px;background:#E1E1E1;border:1px solid #C8C6C4;box-sizing:border-box;"></div><div class="r" style="left:644px;top:105px;width:1px;height:33px;background:#C8C6C4;"></div><div class="r" style="left:665px;top:104px;width:64px;height:35px;background:#E1E1E1;border:1px solid #C8C6C4;box-sizing:border-box;"></div><div class="r" style="left:710px;top:105px;width:1px;height:33px;background:#C8C6C4;"></div><svg class="r" style="left:648px;top:117px;" width="11" height="8" viewBox="0 0 11 8"><path d="M1.5 1.5 L5.5 5.5 L9.5 1.5" stroke="#A19F9D" stroke-width="1.3" fill="none"/></svg><svg class="r" style="left:714px;top:117px;" width="11" height="8" viewBox="0 0 11 8"><path d="M1.5 1.5 L5.5 5.5 L9.5 1.5" stroke="#A19F9D" stroke-width="1.3" fill="none"/></svg><div class="t" style="left:736.70px;top:104.73px;font-size:26.89px;color:#A19F9D;">A</div><svg class="r" style="left:751px;top:107px;" width="10" height="8" viewBox="0 0 10 8"><path d="M1.5 5.5 L5 2 L8.5 5.5" stroke="#A19F9D" stroke-width="1.2" fill="none"/></svg><div class="t" style="left:772.50px;top:109.66px;font-size:21.08px;color:#A19F9D;">A</div><svg class="r" style="left:785px;top:107px;" width="10" height="8" viewBox="0 0 10 8"><path d="M1.5 2 L5 5.5 L8.5 2" stroke="#A19F9D" stroke-width="1.2" fill="none"/></svg><div class="t" style="left:514.00px;top:144.29px;font-size:22.09px;color:#A19F9D;font-weight:700;transform:scaleX(0.8);transform-origin:0 0;">B</div><div class="t" style="left:548.40px;top:144.59px;font-size:22.09px;color:#A19F9D;font-style:italic;font-family:'Liberation Serif',serif;">I</div><div class="t" style="left:580.80px;top:144.29px;font-size:22.09px;color:#A19F9D;transform:scaleX(0.85);transform-origin:0 0;">U</div><div class="r" style="left:579px;top:164.4px;width:14px;height:1.7px;background:#A19F9D;"></div><div class="r" style="left:607.5px;top:142.5px;width:1px;height:31px;background:#C8C6C4;"></div><div class="r" style="left:726.5px;top:142.5px;width:1px;height:31px;background:#C8C6C4;"></div><div class="r" style="left:617.5px;top:178px;width:1px;height:32px;background:#C8C6C4;"></div><div class="r" style="left:726.5px;top:178px;width:1px;height:32px;background:#C8C6C4;"></div><svg class="r" style="left:615px;top:144px;" width="25" height="25" viewBox="0 0 25 25"><rect x="1" y="1" width="3.5" height="3.5" fill="#A19F9D"/><rect x="1" y="10" width="3.5" height="3.5" fill="#A19F9D"/><rect x="1" y="19" width="3.5" height="3.5" fill="#A19F9D"/><path d="M8 3 H23.5 M8 12 H23.5 M8 21 H23.5" stroke="#A19F9D" stroke-width="1.5"/></svg><svg class="r" style="left:649px;top:159px;" width="11" height="8" viewBox="0 0 11 8"><path d="M1.5 1.5 L5.5 5.5 L9.5 1.5" stroke="#A19F9D" stroke-width="1.3" fill="none"/></svg><svg class="r" style="left:670px;top:144px;" width="26" height="26" viewBox="0 0 26 26"><text x="2" y="7.5" font-size="7" fill="#A19F9D" font-family="Liberation Sans">1</text><text x="1.5" y="16.5" font-size="7" fill="#A19F9D" font-family="Liberation Sans">2</text><text x="1.5" y="25" font-size="7" fill="#A19F9D" font-family="Liberation Sans">3</text><path d="M8 3 H24.5 M8 12 H24.5 M8 21 H24.5" stroke="#A19F9D" stroke-width="1.5"/></svg><svg class="r" style="left:705px;top:159px;" width="11" height="8" viewBox="0 0 11 8"><path d="M1.5 1.5 L5.5 5.5 L9.5 1.5" stroke="#A19F9D" stroke-width="1.3" fill="none"/></svg><svg class="r" style="left:735px;top:144px;" width="24" height="25" viewBox="0 0 24 25"><path d="M1 3 H23 M12 12 H23 M1 21 H23" stroke="#A19F9D" stroke-width="1.5"/><path d="M9 12 H2 M5.5 8.5 L2 12 L5.5 15.5" stroke="#A19F9D" stroke-width="1.3" fill="none"/><path d="M12 7.5 H23 M12 16.5 H23" stroke="#A19F9D" stroke-width="0"/></svg><svg class="r" style="left:769px;top:144px;" width="24" height="25" viewBox="0 0 24 25"><path d="M1 3 H23 M12 12 H23 M1 21 H23" stroke="#A19F9D" stroke-width="1.5"/><path d="M1 12 H9 M5.5 8.5 L9 12 L5.5 15.5" stroke="#A19F9D" stroke-width="1.3" fill="none"/></svg><svg class="r" style="left:506px;top:180px;" width="26" height="26" viewBox="0 0 26 26"><path d="M9.5 12.5 L20 2 A2.2 2.2 0 0 1 23.3 2 L23.8 2.5 A2.2 2.2 0 0 1 23.8 5.7 L13.2 16.2 Z" fill="#EAE9E8" stroke="#A19F9D" stroke-width="1.5" stroke-linejoin="round"/><path d="M9.5 12.5 L13.2 16.2 L11 18 L3 18 L8 12.8 Z" fill="#B8B6B4"/><rect x="1" y="19" width="24" height="6" fill="#B4B1AE"/></svg><svg class="r" style="left:540px;top:191px;" width="11" height="8" viewBox="0 0 11 8"><path d="M1.5 1.5 L5.5 5.5 L9.5 1.5" stroke="#A19F9D" stroke-width="1.3" fill="none"/></svg><div class="t" style="left:568.50px;top:177.44px;font-size:23.69px;color:#A19F9D;">A</div><div class="r" style="left:563px;top:199px;width:24px;height:6px;background:#B4B1AE;"></div><svg class="r" style="left:597px;top:191px;" width="11" height="8" viewBox="0 0 11 8"><path d="M1.5 1.5 L5.5 5.5 L9.5 1.5" stroke="#A19F9D" stroke-width="1.3" fill="none"/></svg><svg class="r" style="left:627px;top:181px;" width="23" height="22" viewBox="0 0 23 22"><path d="M1 2 H22 M1 8 H16 M1 14 H22 M1 20 H16" stroke="#A19F9D" stroke-width="1.5"/></svg><svg class="r" style="left:661px;top:181px;" width="23" height="22" viewBox="0 0 23 22"><path d="M1 2 H22 M4 8 H19 M1 14 H22 M4 20 H19" stroke="#A19F9D" stroke-width="1.5"/></svg><svg class="r" style="left:695px;top:181px;" width="23" height="22" viewBox="0 0 23 22"><path d="M1 2 H22 M7 8 H22 M1 14 H22 M7 20 H22" stroke="#A19F9D" stroke-width="1.5"/></svg><svg class="r" style="left:734px;top:180px;" width="26" height="26" viewBox="0 0 26 26"><path d="M1.5 22 L8.5 2 L15.5 22 M4.5 14 H12.5" stroke="#A19F9D" stroke-width="1.4" fill="none"/><path d="M13 18 L19.5 11.5 L24.5 16.5 L18 23 Z" fill="#F3F2F1" stroke="#A19F9D" stroke-width="1.4"/><path d="M15.5 15.5 L20.5 20.5" stroke="#A19F9D" stroke-width="1.2"/></svg><svg class="r" style="left:839px;top:108px;" width="34" height="44" viewBox="0 0 34 44"><path d="M2 37 V4 A3 3 0 0 1 5 1 H32 V36 H6 A4 4 0 0 0 6 43 H32 V37" fill="#FAFAFA" stroke="#333" stroke-width="1.6"/><circle cx="16.5" cy="14" r="5.8" fill="none" stroke="#333" stroke-width="1.6"/><path d="M6.5 30 A10 10 0 0 1 26.5 30" fill="none" stroke="#333" stroke-width="1.6"/></svg><div class="t" style="left:824.80px;top:160.54px;font-size:18.03px;color:#3B3A39;letter-spacing:-0.426px;">Address</div><div class="t" style="left:836.80px;top:184.56px;font-size:18.00px;color:#3B3A39;letter-spacing:-0.546px;">Book</div><svg class="r" style="left:902px;top:108px;" width="46" height="46" viewBox="0 0 46 46"><circle cx="31" cy="10.2" r="7.3" fill="#F5F5F5" stroke="#333" stroke-width="1.6"/><path d="M19.5 27 A11.5 11.5 0 0 1 42.5 26.5" fill="#F5F5F5" stroke="#333" stroke-width="1.6"/><circle cx="13" cy="24.5" r="7.3" fill="#F5F5F5" stroke="#2F8FE0" stroke-width="1.6"/><path d="M1.2 42.3 A11.8 11.8 0 0 1 22 36.5" fill="#F5F5F5" stroke="#2F8FE0" stroke-width="1.6"/><path d="M20.7 38.6 L27.6 45 L44.3 28.3" fill="none" stroke="#2E9A3E" stroke-width="1.8"/></svg><div class="t" style="left:900.40px;top:160.98px;font-size:17.50px;color:#3B3A39;letter-spacing:-0.827px;">Check</div><div class="t" style="left:897.00px;top:184.78px;font-size:17.74px;color:#3B3A39;letter-spacing:-0.758px;">Names</div><svg class="r" style="left:986px;top:105px;" width="17" height="26" viewBox="0 0 17 26"><path d="M11 7 V19 A4 4 0 0 1 3 19 V6 A5 5 0 0 1 13.5 6 V17" fill="none" stroke="#333" stroke-width="1.6"/><path d="M6.5 6 V17" stroke="#333" stroke-width="1.5"/></svg><div class="t" style="left:1011.30px;top:110.76px;font-size:17.99px;color:#3B3A39;letter-spacing:-0.343px;">Attach File</div><svg class="r" style="left:1098px;top:114px;" width="11" height="8" viewBox="0 0 11 8"><path d="M1.5 1.5 L5.5 5.5 L9.5 1.5" stroke="#333" stroke-width="1.5" fill="none"/></svg><svg class="r" style="left:982px;top:143px;" width="26" height="18" viewBox="0 0 26 18"><path d="M9 3.5 H6 A5 5 0 0 0 6 13.5 H11 A5 5 0 0 0 15 8" fill="none" stroke="#B8B6B4" stroke-width="1.6"/><path d="M16 14 H19.5 A5 5 0 0 0 19.5 4 H14.5 A5 5 0 0 0 10.5 9.5" fill="none" stroke="#B8B6B4" stroke-width="1.6"/></svg><div class="t" style="left:1012.00px;top:145.37px;font-size:17.28px;color:#B3B0AD;letter-spacing:-0.831px;">Link</div><svg class="r" style="left:1056px;top:148px;" width="11" height="8" viewBox="0 0 11 8"><path d="M1.5 1.5 L5.5 5.5 L9.5 1.5" stroke="#B8B6B4" stroke-width="1.3" fill="none"/></svg><svg class="r" style="left:985px;top:173px;" width="24" height="27" viewBox="0 0 24 27"><path d="M1.5 1.5 H13 L17 6 V25 H1.5 Z" fill="#FAFAFA" stroke="#333" stroke-width="1.5"/><path d="M13 1.5 V6 H17" fill="none" stroke="#333" stroke-width="1.3"/><path d="M5 21 L8 14 L18.5 3.5 A1.8 1.8 0 0 1 21.5 6.5 L11 17 Z" fill="#FAFAFA" stroke="#2B88D8" stroke-width="1.5"/><path d="M4 23.5 H15" stroke="#2B88D8" stroke-width="1.6"/></svg><div class="t" style="left:1012.00px;top:178.76px;font-size:18.01px;color:#3B3A39;letter-spacing:-0.383px;">Signature</div><svg class="r" style="left:1091px;top:181px;" width="11" height="8" viewBox="0 0 11 8"><path d="M1.5 1.5 L5.5 5.5 L9.5 1.5" stroke="#333" stroke-width="1.5" fill="none"/></svg><svg class="r" style="left:1159px;top:108px;" width="44" height="47" viewBox="0 0 44 47"><path d="M2 25 V2 H32 V23 M2 25 H14 M2 22 V41 H14 M2 22 H32" fill="#F7F7F7" stroke="#333" stroke-width="1.6"/><path d="M12 7.5 V9 H22 V7.5" fill="none" stroke="#333" stroke-width="1.4"/><rect x="15.5" y="27" width="26" height="18.5" fill="#F7F7F7" stroke="#2B88D8" stroke-width="1.7"/><path d="M16 28 L28.5 37 L41 28" fill="none" stroke="#2B88D8" stroke-width="1.6"/></svg><div class="t" style="left:1151.60px;top:160.72px;font-size:18.05px;color:#3B3A39;letter-spacing:-0.407px;">Assign</div><div class="t" style="left:1147.30px;top:185.29px;font-size:17.38px;color:#3B3A39;letter-spacing:-0.679px;">Policy</div><svg class="r" style="left:1196px;top:187.5px;" width="11" height="8" viewBox="0 0 11 8"><path d="M1.5 1.5 L5.5 5.5 L9.5 1.5" stroke="#333" stroke-width="1.5" fill="none"/></svg><svg class="r" style="left:1217px;top:108px;" width="20" height="26" viewBox="0 0 20 26"><path d="M2.5 2 V25" stroke="#333" stroke-width="1.5"/><rect x="3" y="1.5" width="7" height="10.5" fill="#F39CA0" stroke="#D13438" stroke-width="1.5"/><rect x="8.5" y="4.5" width="8" height="10" fill="#F39CA0" stroke="#D13438" stroke-width="1.5"/></svg><svg class="r" style="left:1244.5px;top:118.5px;" width="11" height="8" viewBox="0 0 11 8"><path d="M1.5 1.5 L5.5 5.5 L9.5 1.5" stroke="#333" stroke-width="1.5" fill="none"/></svg><svg class="r" style="left:1224px;top:144px;" width="8" height="26" viewBox="0 0 8 26"><rect x="2.2" y="0.5" width="3" height="17" fill="#E81123"/><rect x="2.2" y="21" width="3" height="3.5" fill="#E81123"/></svg><svg class="r" style="left:1217px;top:180px;" width="20" height="26" viewBox="0 0 20 26"><path d="M10 1 V24 M2.5 16.5 L10 24 L17.5 16.5" stroke="#1E8BE0" stroke-width="1.6" fill="none"/></svg><svg class="r" style="left:1304px;top:107px;" width="32" height="48" viewBox="0 0 32 48"><rect x="6.5" y="1.5" width="17" height="30.5" rx="8.5" fill="#7DB8EA" stroke="#1F6FC4" stroke-width="1.8"/><path d="M1.8 23.5 A13.2 13.2 0 0 0 28.2 23.5" fill="none" stroke="#333" stroke-width="1.8"/><path d="M15 37 V46.5" stroke="#333" stroke-width="1.8"/></svg><div class="t" style="left:1291.70px;top:160.69px;font-size:18.08px;color:#3B3A39;letter-spacing:-0.337px;">Dictate</div><svg class="r" style="left:1381.5px;top:106.5px;" width="48" height="48" viewBox="0 0 48 48"><path d="M2 46 L4 36 L27 2.5 L33.5 7 L10.5 41 Z" fill="#FFFFFF" stroke="#1E5BC6" stroke-width="2.2"/><path d="M2 46 L10.5 41 L4 36 Z" fill="#1E5BC6"/><rect x="25" y="0.8" width="9" height="4.5" transform="rotate(35 29.5 3)" fill="#1E5BC6"/><rect x="27" y="12.5" width="20.5" height="7.5" rx="3.75" fill="#1E5BC6"/><rect x="20" y="22" width="19" height="7.5" rx="3.75" fill="#1E5BC6"/><rect x="13" y="31.5" width="18" height="7.5" rx="3.75" fill="#1E5BC6"/></svg><div class="t" style="left:1381.60px;top:160.56px;font-size:18.24px;color:#3B3A39;letter-spacing:-0.260px;">Editor</div><svg class="r" style="left:1474px;top:102px;" width="60" height="56" viewBox="0 0 60 56"><path d="M7.8 9.1 H23 A7 4 0 0 1 29.3 12.4 A7 4 0 0 1 35.5 9.1 H50.3 V28.5 L30 30 V42.2 H23 L7.8 42.2 Z" fill="#FAFAFA"/><path d="M29.3 35.2 V12.4 A7 4 0 0 0 23 9.1 H7.8 V42.2 H23 A7 4 0 0 1 28.3 45.3 M29.3 12.4 A7 4 0 0 1 35.5 9.1 H50.3 V28.5" fill="none" stroke="#333" stroke-width="1.6"/><path d="M30.8 37.6 H34 L42.5 30 V50.5 L34 43.5 H30.8 Z" fill="#FAFAFA" stroke="#1E88D6" stroke-width="1.6" stroke-linejoin="round"/><path d="M46.3 34 A11 11 0 0 1 46.3 47.2 M49.9 31.3 A16 16 0 0 1 49.9 50.5" fill="none" stroke="#1E88D6" stroke-width="1.6"/></svg><div class="t" style="left:1463.30px;top:160.54px;font-size:18.26px;color:#3B3A39;letter-spacing:-0.274px;">Immersive</div><div class="t" style="left:1478.00px;top:185.26px;font-size:17.41px;color:#3B3A39;letter-spacing:-0.819px;">Reader</div><svg class="r" style="left:1580px;top:102px;" width="56" height="56" viewBox="0 0 56 56"><circle cx="28.5" cy="17.9" r="10.1" fill="none" stroke="#4A86F0" stroke-width="2.4"/><path d="M17.5 20.3 H12.5 A7.3 7.3 0 0 0 7.3 32.8 L22.8 47.3 A5 5 0 0 0 30.8 47.3 L45.8 32.8 A7.3 7.3 0 0 0 40.5 20.3 H37 A7 7 0 0 0 32 22.5 L17.8 36.6 H14" fill="none" stroke="#4A86F0" stroke-width="2.4" stroke-linejoin="round"/></svg><div class="t" style="left:1591.80px;top:161.12px;font-size:17.58px;color:#3B3A39;letter-spacing:-0.708px;">Viva</div><div class="t" style="left:1576.60px;top:184.65px;font-size:18.13px;color:#3B3A39;letter-spacing:-0.295px;">Insights</div><svg class="r" style="left:1680px;top:100px;" width="60" height="60" viewBox="0 0 60 60"><path d="M30.3 43.2 H13.4 V7.3 H32.4 L42.1 17 V25" fill="none" stroke="#1A6CBF" stroke-width="3" stroke-linejoin="miter"/><path d="M32 7.5 V18.2 H42.2" fill="none" stroke="#1A6CBF" stroke-width="2.6"/><path d="M38.6 28.6 H47.2 L41.7 38.9 H47.2 L34 53.3 L38.2 43 H33 Z" fill="#0F5FA8"/></svg><div class="t" style="left:1690.20px;top:160.85px;font-size:17.89px;color:#3B3A39;letter-spacing:-0.588px;">View</div><div class="t" style="left:1669.60px;top:184.88px;font-size:17.86px;color:#3B3A39;letter-spacing:-0.482px;">Templates</div><svg class="r" style="left:1873px;top:224px;" width="18" height="13" viewBox="0 0 18 13"><path d="M2 10.5 L9 3.5 L16 10.5" stroke="#444" stroke-width="1.5" fill="none"/></svg><div class="r" style="left:373px;top:242px;width:1528px;height:776px;background:#FFFFFF;"></div><div class="r" style="left:373px;top:242px;width:1528px;height:4px;background:linear-gradient(#EDEDED,#FFFFFF);"></div><div class="r" style="left:397px;top:271px;width:90px;height:114px;background:#FFF;border:1px solid #BDB9B5;box-sizing:border-box;"></div><svg class="r" style="left:424px;top:293px;" width="35" height="30" viewBox="0 0 35 30"><path d="M1.8 2.5 L32.5 14.5 L1.8 26.8 L6.5 14.5 Z" fill="#F7F7F7" stroke="#333" stroke-width="1.5" stroke-linejoin="miter"/><path d="M6.5 14.5 H32" stroke="#333" stroke-width="1.3"/></svg><div class="t" style="left:422.60px;top:344.30px;font-size:17.83px;color:#323130;letter-spacing:-0.980px;">Send</div><div class="r" style="left:511px;top:271px;width:120px;height:48px;background:#FFF;border:1px solid #BDB9B5;box-sizing:border-box;"></div><div class="r" style="left:511px;top:330px;width:120px;height:48px;background:#FFF;border:1px solid #BDB9B5;box-sizing:border-box;"></div><div class="r" style="left:511px;top:389px;width:120px;height:48px;background:#FFF;border:1px solid #BDB9B5;box-sizing:border-box;"></div><div class="t" style="left:535.60px;top:286.75px;font-size:18.24px;color:#323130;letter-spacing:-0.699px;">From</div><svg class="r" style="left:586px;top:290px;" width="17" height="12" viewBox="0 0 17 12"><path d="M2.5 2.5 L8.5 8.5 L14.5 2.5" stroke="#323130" stroke-width="1.7" fill="none"/></svg><div class="t" style="left:561.10px;top:345.10px;font-size:18.78px;color:#323130;letter-spacing:-0.416px;">To</div><div class="t" style="left:561.00px;top:405.17px;font-size:17.51px;color:#323130;letter-spacing:-1.865px;">Cc</div><div class="r" style="left:649px;top:325px;width:1229px;height:1px;background:#E1DFDD;"></div><div class="r" style="left:649px;top:384px;width:1229px;height:1px;background:#A19F9D;"></div><div class="r" style="left:649px;top:443px;width:1229px;height:1px;background:#A19F9D;"></div><div class="r" style="left:649px;top:502.5px;width:1229px;height:2px;background:#2B7BD0;"></div><div class="r" style="left:373px;top:504px;width:276px;height:1.5px;background:#E1DFDD;"></div><div class="r" style="left:1878px;top:504px;width:23px;height:1px;background:#E1DFDD;"></div><div class="t" style="left:649.50px;top:286.57px;font-size:18.46px;color:#605E5C;letter-spacing:-0.344px;">steve.kirk@ppi-engineering.com</div><div class="t" style="left:649.50px;top:346.78px;font-size:17.39px;color:#323130;letter-spacing:-1.037px;">STEVE.KIRK@PPI-ENGINEERING.COM</div><div class="t" style="left:542.50px;top:465.17px;font-size:18.22px;color:#605E5C;letter-spacing:-0.510px;">Subject</div><div class="t" style="left:654.70px;top:464.87px;font-size:18.58px;color:#323130;letter-spacing:-0.326px;">Acknowledgement Number 14</div><div class="r" style="left:897px;top:461px;width:1.3px;height:23px;background:#000;"></div><div class="r" style="left:398px;top:517px;width:335px;height:62px;background:#FAFAFA;border:1px solid #BDBBB8;box-sizing:border-box;"></div><svg class="r" style="left:410px;top:526px;" width="38" height="44" viewBox="0 0 38 44"><path d="M3.5 1.5 H27 L34 9 V42.5 H3.5 Z" fill="#F7F9FA" stroke="#8E8E8E" stroke-width="1.4"/><path d="M27 1.5 V9 H34" fill="#E4E4E4" stroke="#9A9A9A" stroke-width="1"/><path d="M6.5 5 H24 M6.5 9 H24 M6.5 13 H30 M6.5 39 H30" stroke="#B8B8B8" stroke-width="1"/><rect x="1" y="17" width="36" height="19" fill="#E0001B"/><text x="19" y="31" font-size="11.5" font-weight="700" fill="#FFF" text-anchor="middle" font-family="Liberation Sans">PDF</text></svg><div class="t" style="left:468.60px;top:526.98px;font-size:18.68px;color:#323130;letter-spacing:-0.384px;">Acknowledement Details.pdf</div><div class="t" style="left:468.60px;top:552.12px;font-size:17.23px;color:#605E5C;letter-spacing:-0.610px;">27 KB</div><svg class="r" style="left:705px;top:543px;" width="18" height="12" viewBox="0 0 18 12"><path d="M2.5 2.5 L8.5 8.5 L14.5 2.5" stroke="#323130" stroke-width="1.8" fill="none"/></svg><div class="r" style="left:373px;top:592px;width:1528px;height:1.5px;background:#E1DFDD;"></div><div class="t" style="left:388.30px;top:651.39px;font-size:19.62px;color:#000;letter-spacing:-0.078px;">steve,</div><div class="t" style="left:388.30px;top:708.26px;font-size:19.77px;color:#000;letter-spacing:0.277px;">Your latest Acknowledgement is attached.</div><div class="r" style="left:0px;top:1020px;width:1920px;height:60px;background:linear-gradient(90deg,#223743 0%,#22333F 40%,#1E2B3E 70%,#1C2740 100%);"></div><div class="r" style="left:0px;top:1020px;width:72px;height:60px;background:#213843;"></div><svg class="r" style="left:23px;top:1037px;" width="26" height="26" viewBox="0 0 26 26"><path d="M1 3.8 L10.6 2.5 V12.3 H1 Z M11.8 2.3 L25 0.5 V12.3 H11.8 Z M1 13.5 H10.6 V23.5 L1 22.2 Z M11.8 13.5 H25 V25.5 L11.8 23.7 Z" fill="#FFF"/></svg><div class="r" style="left:72px;top:1020px;width:515.5px;height:60px;background:#F1F1F1;border-top:1.5px solid #BDBDBD;border-bottom:1.5px solid #BDBDBD;border-right:1.5px solid #C4C4C4;box-sizing:border-box;"></div><svg class="r" style="left:88px;top:1036px;" width="28" height="28" viewBox="0 0 28 28"><circle cx="16.5" cy="10" r="7.6" stroke="#1A1A1A" stroke-width="1.8" fill="none"/><path d="M11 15.5 L2.5 24.5" stroke="#1A1A1A" stroke-width="1.9"/></svg><div class="t" style="left:132.80px;top:1040.77px;font-size:22.71px;color:#1F1F1F;letter-spacing:-0.263px;">Type here to search</div><svg class="r" style="left:486px;top:1026px;" width="84" height="50" viewBox="0 0 84 50"><defs><linearGradient id="pg" x1="0" y1="0" x2="1" y2="1"><stop offset="0" stop-color="#F5A623"/><stop offset="1" stop-color="#FFC83D"/></linearGradient><linearGradient id="pb" x1="0" y1="0" x2="1" y2="1"><stop offset="0" stop-color="#E8883A"/><stop offset="1" stop-color="#FFD54A"/></linearGradient></defs><circle cx="16" cy="21.3" r="3" fill="#FFB000"/><circle cx="5.5" cy="34.3" r="3" fill="#6AD5EA"/><rect x="31" y="3" width="21" height="28" rx="10" fill="url(#pg)"/><path d="M21 45.3 C23 36 31 30 41.5 30 C52 30 60 36 62 45.3 Z" fill="url(#pb)"/><path d="M76.8 12.5 Q77.8 18.2 83.5 19.2 Q77.8 20.2 76.8 25.9 Q75.8 20.2 70.1 19.2 Q75.8 18.2 76.8 12.5 Z" fill="#EE88F2"/><path d="M59.5 37.5 L70.5 45" stroke="#3A3AD0" stroke-width="6"/><circle cx="54" cy="31.3" r="9.5" fill="#A9E4F4" stroke="#1F4FD8" stroke-width="2"/><ellipse cx="51" cy="27.5" rx="2.5" ry="1.8" fill="#E8F8FF"/></svg><svg class="r" style="left:611px;top:1038px;" width="26" height="26" viewBox="0 0 26 26"><circle cx="12.9" cy="11.8" r="9.8" stroke="#FFF" stroke-width="3.6" fill="none"/></svg><div class="r" style="left:665px;top:1020px;width:66px;height:60px;background:#4A5A63;"></div><div class="r" style="left:731px;top:1020px;width:7px;height:60px;background:#2F3E47;"></div><div class="r" style="left:732px;top:1020px;width:1.5px;height:56px;background:#56646C;"></div><div class="r" style="left:665px;top:1077px;width:73px;height:3px;background:#76B9ED;"></div><svg class="r" style="left:680px;top:1030px;" width="42" height="40" viewBox="0 0 42 40"><rect x="12.9" y="4" width="24" height="5" rx="1" fill="#0364B8"/><rect x="12.9" y="8.7" width="8.4" height="6.3" fill="#0F6CC0"/><rect x="21.3" y="8.7" width="7.5" height="6.3" fill="#1C8FE0"/><rect x="28.8" y="8.7" width="8.1" height="6.3" fill="#50D9FF"/><rect x="12.9" y="15" width="8.4" height="6" fill="#0A55A6"/><rect x="21.3" y="15" width="7.5" height="6" fill="#0F78D4"/><rect x="28.8" y="15" width="8.1" height="6" fill="#28A8EA"/><rect x="12.9" y="20" width="24" height="10" fill="#0A55A6"/><path d="M11 20.6 L24.5 29 L38 20.6 V34.5 A1.2 1.2 0 0 1 36.8 35.7 H12.2 A1.2 1.2 0 0 1 11 34.5 Z" fill="#1490DF"/><path d="M11 35.7 L24.5 26.5 L38 35.7 Z" fill="#28A8EA"/><rect x="3" y="11" width="17.6" height="17.75" rx="1.5" fill="#0F6CC8"/><ellipse cx="11.9" cy="20" rx="4.1" ry="4.7" fill="none" stroke="#FFF" stroke-width="2.4"/></svg><svg class="r" style="left:758px;top:1032px;" width="36" height="36" viewBox="0 0 36 36"><defs><linearGradient id="skg" x1="0" y1="0" x2="0.6" y2="1"><stop offset="0" stop-color="#12B6F5"/><stop offset="1" stop-color="#0A80D6"/></linearGradient></defs><circle cx="9.5" cy="9.5" r="7.5" fill="#1A9FE4"/><circle cx="26.5" cy="26.5" r="7.5" fill="#0B82D2"/><circle cx="18.25" cy="18" r="15.6" fill="url(#skg)"/><text x="18.3" y="26.3" font-size="24" font-weight="700" fill="#FFF" text-anchor="middle" font-family="Liberation Sans">S</text></svg><div class="r" style="left:821px;top:1077px;width:61px;height:3px;background:#76B9ED;"></div><svg class="r" style="left:832px;top:1031px;" width="38" height="38" viewBox="0 0 38 38"><defs><linearGradient id="eg1" x1="0" y1="0" x2="1" y2="0.6"><stop offset="0" stop-color="#1B9DE2"/><stop offset="0.6" stop-color="#35C1F1"/><stop offset="1" stop-color="#66EB6E"/></linearGradient><linearGradient id="eg2" x1="0" y1="0" x2="1" y2="1"><stop offset="0" stop-color="#0C59A4"/><stop offset="1" stop-color="#114A8B"/></linearGradient></defs><path d="M19 1 C30 1 37 9 37 17 C37 22.5 32.5 25.5 27.5 25.5 C22 25.5 19.5 22 20.5 19 C21.5 16 19 13.5 15 13.5 C8 13.5 3 19.5 3 26 C3 10 10 1 19 1 Z" fill="url(#eg1)"/><path d="M3 26 C3 18 9 13 15 13.5 C19 13.8 21 16 20 19.5 C19 23 21.5 27 27 27.5 C30 27.8 33 27 34 26.5 C31 33 25 37 18.5 37 C9.5 37 3 32 3 26 Z" fill="url(#eg2)"/><path d="M11.5 24 C11.5 19 15 16.5 18.5 17 C15 18 14.5 23 17 27.5 C19 31.5 25 34.5 33 30 C29 35 23.5 37 18.5 37 C13 36 11.5 30 11.5 24 Z" fill="#1483D4"/></svg><div class="r" style="left:894px;top:1020px;width:26px;height:60px;background:#EFEFEF;"></div><svg class="r" style="left:897px;top:1029px;" width="20" height="14" viewBox="0 0 20 14"><path d="M3 10.5 L10 3.5 L17 10.5" stroke="#333" stroke-width="1.8" fill="none"/></svg><svg class="r" style="left:897px;top:1060px;" width="20" height="14" viewBox="0 0 20 14"><path d="M3 3.5 L10 10.5 L17 3.5" stroke="#333" stroke-width="1.8" fill="none"/></svg><div class="t" style="left:930.60px;top:1041.61px;font-size:18.05px;color:#E3E3E3;letter-spacing:-0.410px;">Address</div><div class="r" style="left:1000.8px;top:1028px;width:345.2px;height:45px;background:#FFFFFF;"></div><div class="r" style="left:1299px;top:1028px;width:1px;height:45px;background:#C8C8C8;"></div><svg class="r" style="left:1267px;top:1046px;" width="15" height="10" viewBox="0 0 15 10"><path d="M1.5 1.5 L7.5 7.5 L13.5 1.5" stroke="#444" stroke-width="1.3" fill="none"/></svg><svg class="r" style="left:1313px;top:1041px;" width="22" height="20" viewBox="0 0 22 20"><path d="M15.5 5 A7.2 7.2 0 1 1 8.5 3" fill="none" stroke="#8A8A8A" stroke-width="2.6"/><path d="M8 0 L13.5 3.2 L8 6.2 Z" fill="#8A8A8A"/></svg><svg class="r" style="left:1366px;top:1037px;" width="40" height="26" viewBox="0 0 40 26"><path d="M3 5.5 L10 12.5" stroke="#8E1B12" stroke-width="5" stroke-linecap="round"/><path d="M8 13 L15.5 5.5 L24 14" stroke="#D84315" stroke-width="5.5" stroke-linejoin="round" fill="none"/><path d="M21 17.5 L28 17.5 L28 10.5 L34.5 4 L36.5 4 V23 H17.5 V21 L23 15.5 Z" fill="#D8380E"/></svg><div class="t" style="left:1415.60px;top:1042.92px;font-size:20.05px;color:#FFFFFF;letter-spacing:-0.172px;">AMZ...</div><svg class="r" style="left:1499px;top:1042px;" width="22" height="14" viewBox="0 0 22 14"><path d="M2 11.5 L11 2.5 L20 11.5" stroke="#FFF" stroke-width="1.5" fill="none"/></svg><svg class="r" style="left:1532px;top:1036px;" width="30" height="30" viewBox="0 0 30 30"><path d="M2 4.5 L26 1.5 V22 M2 4.5 V22 L14 24" fill="none" stroke="#FFF" stroke-width="1.4"/><path d="M10 9.5 A5 5 0 0 1 18 9.5 M18 9.5 V7 M18 9.5 H15.5" fill="none" stroke="#FFF" stroke-width="1.3"/><path d="M17 15 A5 5 0 0 1 9.5 16 M9.5 16 V18 M9.5 16 H12" fill="none" stroke="#FFF" stroke-width="1.3"/><circle cx="20.5" cy="20.6" r="5.6" fill="#FF9C00"/></svg><svg class="r" style="left:1570px;top:1040px;" width="26" height="19" viewBox="0 0 26 19"><path d="M2 6 V10 A3 3 0 0 0 8 10 V6 Z M3.5 1 V6 M6.5 1 V6 M5 13 V18" fill="none" stroke="#FFF" stroke-width="1.3"/><rect x="8.5" y="4" width="16" height="11.5" fill="none" stroke="#FFF" stroke-width="1.4"/><rect x="8.5" y="11" width="2.5" height="4.5" fill="#FFF"/></svg><svg class="r" style="left:1608px;top:1041px;" width="22" height="21" viewBox="0 0 22 21"><path d="M2.5 19 A16 16 0 0 1 19 2.5 M6.5 19 A12 12 0 0 1 19 6.5 M10.5 19 A8 8 0 0 1 19 10.5" fill="none" stroke="#FFF" stroke-width="1.3"/><circle cx="17" cy="17" r="1.6" fill="#FFF"/></svg><svg class="r" style="left:1641px;top:1040px;" width="26" height="21" viewBox="0 0 26 21"><path d="M2 7 H6.5 L13 1.5 V19.5 L6.5 14 H2 Z" fill="none" stroke="#FFF" stroke-width="1.3"/><path d="M16 8 A3 3 0 0 1 16 13 M18.5 5.5 A6.5 6.5 0 0 1 18.5 15.5 M21.5 2.5 A10 10 0 0 1 21.5 18.5" fill="none" stroke="#FFF" stroke-width="1.3"/></svg><div class="t" style="left:1682.60px;top:1042.77px;font-size:16.80px;color:#FFFFFF;letter-spacing:-1.889px;">ENG</div><div class="t" style="left:1762.70px;top:1027.86px;font-size:17.64px;color:#FFFFFF;letter-spacing:-0.573px;">15:36</div><div class="t" style="left:1736.70px;top:1055.72px;font-size:18.17px;color:#FFFFFF;letter-spacing:0.174px;">24/10/2022</div><svg class="r" style="left:1856px;top:1036px;" width="28" height="28" viewBox="0 0 28 28"><path d="M2 2 H26 V23 H16 L11 28 V23 H2 Z" fill="#FFF"/><path d="M6 7 H20 M6 11 H20 M6 15 H16" stroke="#1C2740" stroke-width="1.3"/><circle cx="22" cy="22" r="5.5" fill="#1C2740"/><path d="M24 17.5 A4.8 4.8 0 1 1 18 23.5 A4 4 0 0 0 24 17.5 Z" fill="none" stroke="#FFF" stroke-width="1.2"/></svg><div class="r" style="left:1912px;top:1020px;width:1.5px;height:60px;background:#6B7480;"></div></body></html>
